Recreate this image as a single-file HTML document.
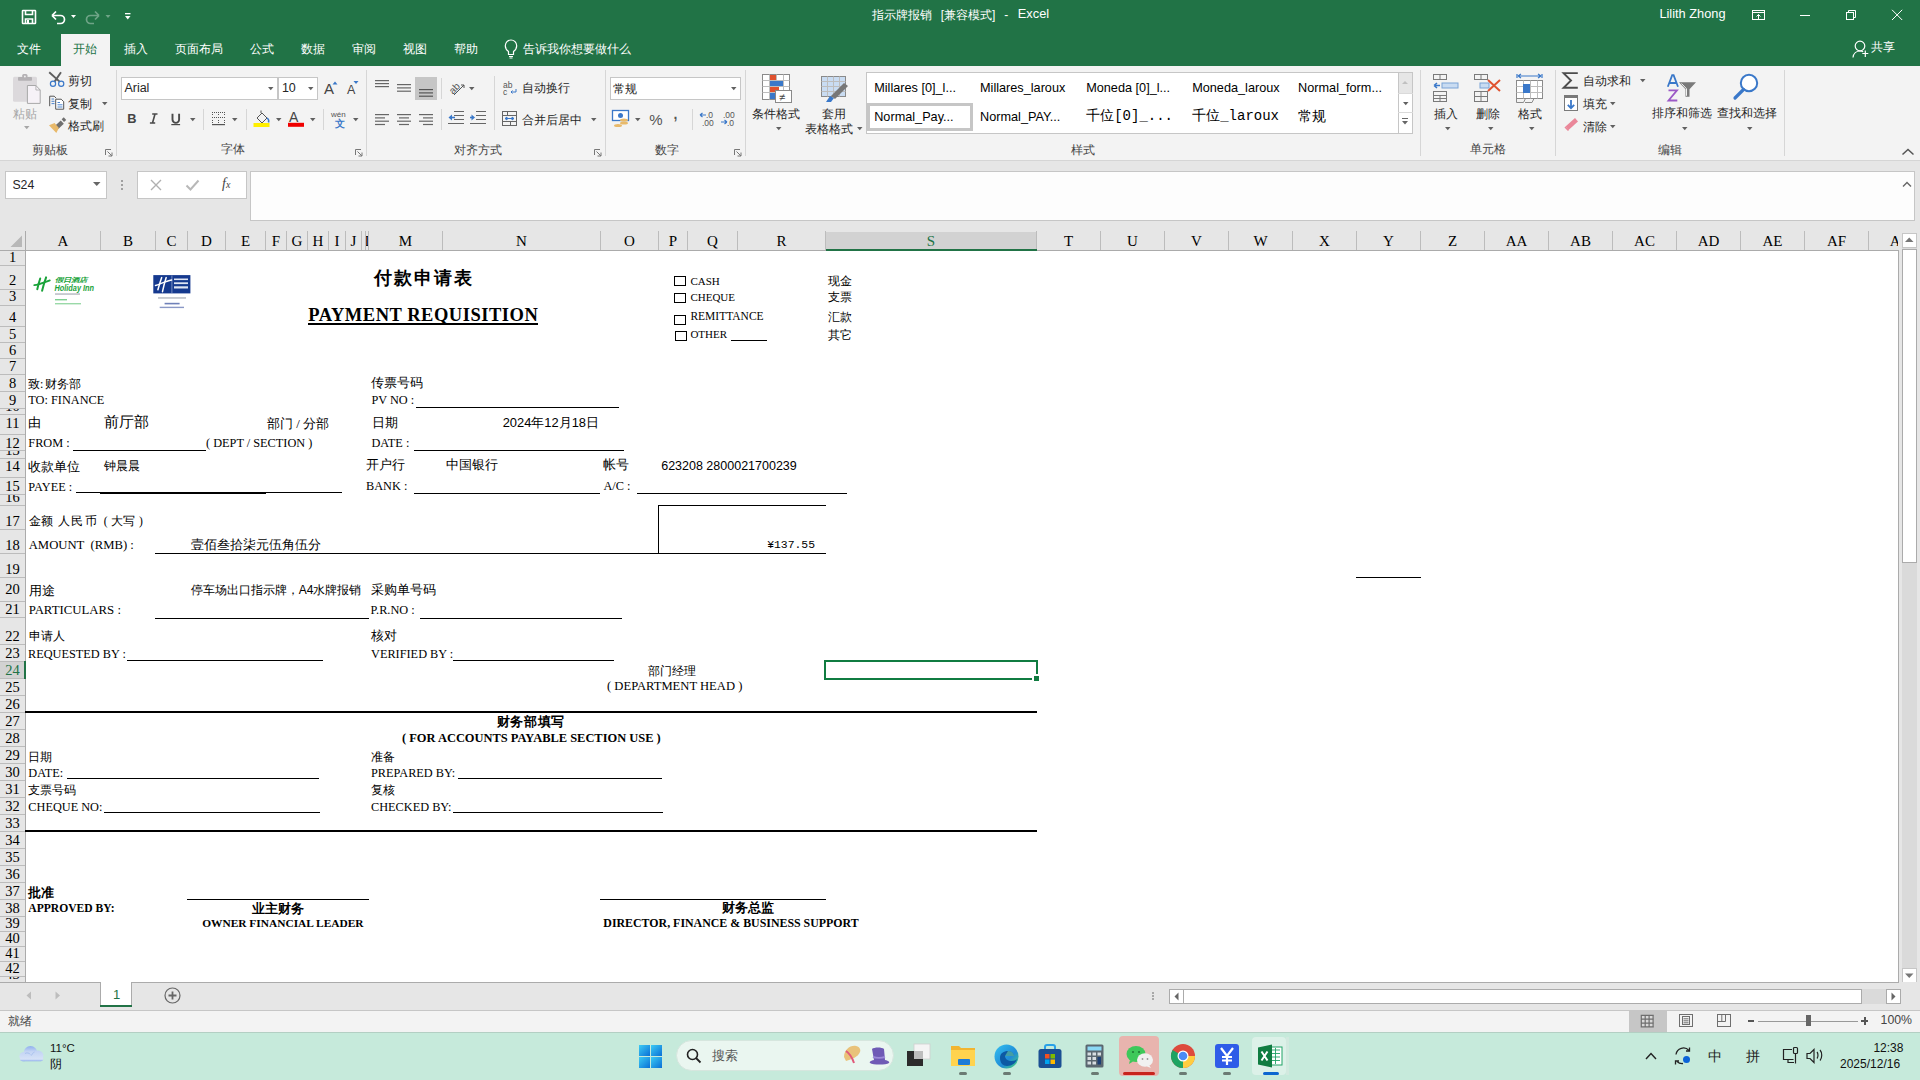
<!DOCTYPE html><html><head><meta charset="utf-8"><style>
*{margin:0;padding:0;box-sizing:border-box}
html,body{width:1920px;height:1080px;overflow:hidden;background:#fff;position:relative;font-family:"Liberation Sans",sans-serif}
.t{position:absolute;white-space:pre;line-height:1}
.r{position:absolute}
svg{position:absolute;overflow:visible}
</style></head><body>
<div class="r" style="left:0px;top:0px;width:1920px;height:66px;background:#217346;"></div>
<div class="r" style="left:61px;top:34px;width:49px;height:32px;background:#f3f3f3;"></div>
<svg style="left:0;top:0" width="140" height="34">
<g fill="none" stroke="#fff" stroke-width="1.6">
<rect x="22.5" y="10.5" width="13" height="13" rx="0.5"/>
<path d="M25.5 10.5v4h7v-4"/><path d="M25.5 23.5v-4.5h7v4.5"/>
</g>
<rect x="27" y="20" width="2" height="3.5" fill="#fff"/>
<path d="M52 15.5l4-4M52 15.5l4 4M52 15.5h8.5a4 4 0 0 1 0 8H57" fill="none" stroke="#fff" stroke-width="1.7"/>
<path d="M71 15h5l-2.5 3z" fill="#fff"/>
<g opacity="0.35"><path d="M99 15.5l-4-4M99 15.5l-4 4M99 15.5h-8.5a4 4 0 0 0 0 8H94" fill="none" stroke="#fff" stroke-width="1.7"/>
<path d="M105.5 15h5l-2.5 3z" fill="#fff"/></g>
<rect x="125" y="13" width="5.5" height="1.3" fill="#fff"/><path d="M125 16h5.5l-2.75 3.5z" fill="#fff"/>
</svg>
<div class="t" style="left:871.7px;top:8.5px;font-size:12px;font-family:'Liberation Sans',sans-serif;font-weight:400;color:#ffffff;">指示牌报销</div>
<div class="t" style="left:940.7px;top:8.5px;font-size:12px;font-family:'Liberation Sans',sans-serif;font-weight:400;color:#ffffff;">[兼容模式]</div>
<div class="t" style="left:1004.2px;top:8.5px;font-size:12px;font-family:'Liberation Sans',sans-serif;font-weight:400;color:#ffffff;">-</div>
<div class="t" style="left:1017.8px;top:8.1px;font-size:12.8px;font-family:'Liberation Sans',sans-serif;font-weight:400;color:#ffffff;">Excel</div>
<div class="t" style="left:1659.4px;top:8.1px;font-size:12.8px;font-family:'Liberation Sans',sans-serif;font-weight:400;color:#ffffff;">Lilith Zhong</div>
<svg style="left:1740;top:0" width="180" height="34">
<g fill="none" stroke="#fff" stroke-width="1">
<rect x="12.5" y="10.5" width="12" height="9"/><path d="M12.5 12.5h12M18.5 14.5v5M16.5 16.5l2-2 2 2"/>
<path d="M60 15.5h10"/>
<rect x="106.5" y="12.5" width="7" height="7"/><path d="M108.5 12.5v-2h7v7h-2"/>
<path d="M152 9.8l10.2 10.2M162.2 9.8L152 20"/>
</g></svg>
<div class="t" style="left:17.0px;top:42.8px;font-size:12px;font-family:'Liberation Sans',sans-serif;font-weight:400;color:#ffffff;">文件</div>
<div class="t" style="left:72.8px;top:42.8px;font-size:12px;font-family:'Liberation Sans',sans-serif;font-weight:400;color:#217346;">开始</div>
<div class="t" style="left:123.7px;top:42.8px;font-size:12px;font-family:'Liberation Sans',sans-serif;font-weight:400;color:#ffffff;">插入</div>
<div class="t" style="left:175.0px;top:42.8px;font-size:12px;font-family:'Liberation Sans',sans-serif;font-weight:400;color:#ffffff;">页面布局</div>
<div class="t" style="left:250.0px;top:42.8px;font-size:12px;font-family:'Liberation Sans',sans-serif;font-weight:400;color:#ffffff;">公式</div>
<div class="t" style="left:300.7px;top:42.8px;font-size:12px;font-family:'Liberation Sans',sans-serif;font-weight:400;color:#ffffff;">数据</div>
<div class="t" style="left:351.9px;top:42.8px;font-size:12px;font-family:'Liberation Sans',sans-serif;font-weight:400;color:#ffffff;">审阅</div>
<div class="t" style="left:402.5px;top:42.8px;font-size:12px;font-family:'Liberation Sans',sans-serif;font-weight:400;color:#ffffff;">视图</div>
<div class="t" style="left:454.0px;top:42.8px;font-size:12px;font-family:'Liberation Sans',sans-serif;font-weight:400;color:#ffffff;">帮助</div>
<div class="t" style="left:523.4px;top:42.8px;font-size:12px;font-family:'Liberation Sans',sans-serif;font-weight:400;color:#ffffff;">告诉我你想要做什么</div>
<svg style="left:500;top:36" width="24" height="26"><g fill="none" stroke="#fff" stroke-width="1.2">
<path d="M8.5 18.5v-3c-2-1.5-3.2-3.4-3.2-5.8a5.7 5.7 0 0 1 11.4 0c0 2.4-1.2 4.3-3.2 5.8v3z"/><path d="M9 20.5h4M9.5 22h3"/></g></svg>
<svg style="left:1848;top:38" width="24" height="22"><g fill="none" stroke="#fff" stroke-width="1.2">
<circle cx="12" cy="8" r="4.8"/><path d="M5 19.5c.5-4 3.5-6.5 7-6.5 1.2 0 2.3.3 3.2.8"/><path d="M14.3 15.5h6M17.3 12.5v6.5"/></g></svg>
<div class="t" style="left:1871.0px;top:41.3px;font-size:12px;font-family:'Liberation Sans',sans-serif;font-weight:400;color:#ffffff;">共享</div>
<div class="r" style="left:0px;top:66px;width:1920px;height:94px;background:#f3f3f3;"></div>
<div class="r" style="left:0px;top:160px;width:1920px;height:1px;background:#d5d5d5;"></div>
<div class="r" style="left:116px;top:70px;width:1px;height:86px;background:#d6d6d6;"></div>
<div class="r" style="left:366px;top:70px;width:1px;height:86px;background:#d6d6d6;"></div>
<div class="r" style="left:605px;top:70px;width:1px;height:86px;background:#d6d6d6;"></div>
<div class="r" style="left:745px;top:70px;width:1px;height:86px;background:#d6d6d6;"></div>
<div class="r" style="left:1420px;top:70px;width:1px;height:86px;background:#d6d6d6;"></div>
<div class="r" style="left:1555px;top:70px;width:1px;height:86px;background:#d6d6d6;"></div>
<div class="r" style="left:1784px;top:70px;width:1px;height:86px;background:#d6d6d6;"></div>
<div class="t" style="left:32.2px;top:143.8px;font-size:12px;font-family:'Liberation Sans',sans-serif;font-weight:400;color:#444;">剪贴板</div>
<div class="t" style="left:221.0px;top:143.4px;font-size:12px;font-family:'Liberation Sans',sans-serif;font-weight:400;color:#444;">字体</div>
<div class="t" style="left:454.2px;top:143.5px;font-size:12px;font-family:'Liberation Sans',sans-serif;font-weight:400;color:#444;">对齐方式</div>
<div class="t" style="left:655.0px;top:143.5px;font-size:12px;font-family:'Liberation Sans',sans-serif;font-weight:400;color:#444;">数字</div>
<div class="t" style="left:1071.2px;top:143.5px;font-size:12px;font-family:'Liberation Sans',sans-serif;font-weight:400;color:#444;">样式</div>
<div class="t" style="left:1470.2px;top:143.3px;font-size:12px;font-family:'Liberation Sans',sans-serif;font-weight:400;color:#444;">单元格</div>
<div class="t" style="left:1658.2px;top:143.5px;font-size:12px;font-family:'Liberation Sans',sans-serif;font-weight:400;color:#444;">编辑</div>
<svg style="left:105px;top:148.5px" width="8" height="8"><path d="M0.5 6V0.5H6" fill="none" stroke="#777" stroke-width="1"/><path d="M2.5 2.5L7 7M7 3.5V7H3.5" fill="none" stroke="#777" stroke-width="1"/></svg>
<svg style="left:355px;top:148.5px" width="8" height="8"><path d="M0.5 6V0.5H6" fill="none" stroke="#777" stroke-width="1"/><path d="M2.5 2.5L7 7M7 3.5V7H3.5" fill="none" stroke="#777" stroke-width="1"/></svg>
<svg style="left:594px;top:148.5px" width="8" height="8"><path d="M0.5 6V0.5H6" fill="none" stroke="#777" stroke-width="1"/><path d="M2.5 2.5L7 7M7 3.5V7H3.5" fill="none" stroke="#777" stroke-width="1"/></svg>
<svg style="left:734px;top:148.5px" width="8" height="8"><path d="M0.5 6V0.5H6" fill="none" stroke="#777" stroke-width="1"/><path d="M2.5 2.5L7 7M7 3.5V7H3.5" fill="none" stroke="#777" stroke-width="1"/></svg>
<svg style="left:1901px;top:148px" width="14" height="8"><path d="M1.5 6.5L7 1.5l5.5 5" fill="none" stroke="#555" stroke-width="1.5"/></svg>
<svg style="left:0px;top:66px" width="70" height="70">
<rect x="13" y="10.8" width="24" height="25" rx="1.5" fill="#dcd9dc"/>
<rect x="18" y="11" width="14" height="3.8" rx="0.8" fill="#b4b1b4"/>
<rect x="22.2" y="8" width="5.3" height="4" rx="1.5" fill="#b4b1b4"/><circle cx="24.9" cy="10.5" r="0.9" fill="#f3f3f3"/>
<path d="M27.4 19.5h8.5l4.3 4.5v13.4H27.4z" fill="#f6f2f7" stroke="#a8a8a8" stroke-width="1"/>
<path d="M35.9 19.5v4.5h4.3" fill="none" stroke="#a8a8a8" stroke-width="0.8"/>
<path d="M49.2 6.2L59.6 15.6M61 6.2L54.6 15.6" stroke="#5f5f5f" stroke-width="1.9"/>
<circle cx="53" cy="17.8" r="2.6" fill="#f3f3f3" stroke="#3a78c9" stroke-width="1.2"/><circle cx="61.2" cy="17.8" r="2.6" fill="#f3f3f3" stroke="#3a78c9" stroke-width="1.2"/>
<path d="M49.7 40.2v-10h4.5l2 2" fill="none" stroke="#555" stroke-width="1"/>
<path d="M51.5 33h2.5M51.5 35.3h3M51.5 37.6h3" stroke="#3a78c9" stroke-width="0.9"/>
<path d="M55.7 43.2v-10h5.5l2.5 2.5v7.5z" fill="#fff" stroke="#555" stroke-width="1"/>
<path d="M57.5 36.5h2.5M57.5 38.8h5M57.5 41h5" stroke="#3a78c9" stroke-width="0.9"/>
<path d="M55.3 59.6l5.5-5.2 3 3.3-5.5 5.2z" fill="#6f6f6f"/><path d="M61.6 53.3l2.2-2 2.4 2.6-2.2 2z" fill="#6f6f6f"/>
<path d="M49 59.3l5.6-2.2 4.3 4.8-2.6 5.2z" fill="#e8b96a"/>
</svg>
<div class="t" style="left:12.5px;top:107.5px;font-size:12px;font-family:'Liberation Sans',sans-serif;font-weight:400;color:#a6a6a6;">粘贴</div>
<svg style="left:24px;top:126px" width="6" height="4"><path d="M0 0h5.5L2.75 3.2z" fill="#a6a6a6"/></svg>
<div class="t" style="left:68.1px;top:75.0px;font-size:12px;font-family:'Liberation Sans',sans-serif;font-weight:400;color:#262626;">剪切</div>
<div class="t" style="left:68.1px;top:97.6px;font-size:12px;font-family:'Liberation Sans',sans-serif;font-weight:400;color:#262626;">复制</div>
<svg style="left:101.9px;top:101.5px" width="6" height="4"><path d="M0 0h5.5L2.75 3.2z" fill="#606060"/></svg>
<div class="t" style="left:68.1px;top:120.3px;font-size:12px;font-family:'Liberation Sans',sans-serif;font-weight:400;color:#262626;">格式刷</div>
<div class="r" style="left:121px;top:77px;width:157px;height:23px;background:#fff;border:1px solid #c6c6c6"></div>
<div class="t" style="left:124.4px;top:82.2px;font-size:12.5px;font-family:'Liberation Sans',sans-serif;font-weight:400;color:#262626;">Arial</div>
<svg style="left:268px;top:87px" width="6" height="4"><path d="M0 0h5.5L2.75 3.2z" fill="#606060"/></svg>
<div class="r" style="left:278px;top:77px;width:40px;height:23px;background:#fff;border:1px solid #c6c6c6"></div>
<div class="t" style="left:281.9px;top:82.2px;font-size:12.5px;font-family:'Liberation Sans',sans-serif;font-weight:400;color:#262626;">10</div>
<svg style="left:307.9px;top:87px" width="6" height="4"><path d="M0 0h5.5L2.75 3.2z" fill="#606060"/></svg>
<svg style="left:322px;top:79px" width="40" height="17">
<text x="2" y="15" font-family="Liberation Sans" font-size="15" fill="#444">A</text>
<path d="M10.5 5.5l2.5-3 2.5 3z" fill="#3a78c9"/>
<text x="25" y="15" font-family="Liberation Sans" font-size="12.5" fill="#444">A</text>
<path d="M31.5 2h5l-2.5 3z" fill="#3a78c9"/>
</svg>
<svg style="left:118px;top:104px" width="112" height="24">
<text x="9.2" y="19" font-family="Liberation Sans" font-size="12.8" font-weight="700" fill="#444">B</text>
<path d="M34.2 10h5.3M31.9 19h5.3M37 10l-2.5 9" fill="none" stroke="#4a4a4a" stroke-width="1.6"/>
<path d="M54.5 9.8v5.8a3.3 3.3 0 0 0 6.6 0V9.8" fill="none" stroke="#4a4a4a" stroke-width="1.9"/>
<rect x="53.3" y="20" width="8.8" height="1.2" fill="#4a4a4a"/>
<g fill="#555">
<rect x="94" y="8" width="1" height="1"/><rect x="96" y="8" width="1" height="1"/><rect x="98" y="8" width="1" height="1"/><rect x="100" y="8" width="1" height="1"/><rect x="102" y="8" width="1" height="1"/><rect x="104" y="8" width="1" height="1"/><rect x="106" y="8" width="1" height="1"/>
<rect x="94" y="13" width="1" height="1"/><rect x="96" y="13" width="1" height="1"/><rect x="98" y="13" width="1" height="1"/><rect x="100" y="13" width="1" height="1"/><rect x="102" y="13" width="1" height="1"/><rect x="104" y="13" width="1" height="1"/><rect x="106" y="13" width="1" height="1"/>
<rect x="94" y="10" width="1" height="1"/><rect x="94" y="16" width="1" height="1"/><rect x="94" y="18" width="1" height="1"/>
<rect x="100" y="10" width="1" height="1"/><rect x="100" y="16" width="1" height="1"/><rect x="100" y="18" width="1" height="1"/>
<rect x="106" y="10" width="1" height="1"/><rect x="106" y="16" width="1" height="1"/><rect x="106" y="18" width="1" height="1"/>
</g>
<rect x="94" y="20" width="13" height="1.2" fill="#555"/>
</svg>
<svg style="left:189.75px;top:118px" width="6" height="4"><path d="M0 0h5.5L2.75 3.2z" fill="#606060"/></svg>
<div class="r" style="left:203px;top:109px;width:1px;height:21px;background:#d6d6d6;"></div>
<svg style="left:232px;top:118px" width="6" height="4"><path d="M0 0h5.5L2.75 3.2z" fill="#606060"/></svg>
<div class="r" style="left:246px;top:109px;width:1px;height:21px;background:#d6d6d6;"></div>
<svg style="left:253px;top:110px" width="20" height="18">
<path d="M4 8l5-5 5 5-5 5z" fill="none" stroke="#555" stroke-width="1"/><path d="M8 3V0.5" stroke="#555"/>
<path d="M14 8c1.5 1 2 3 1.5 4.5" fill="none" stroke="#3a78c9" stroke-width="1.5"/>
<rect x="0.5" y="13" width="16" height="4" fill="#ffef00"/></svg>
<svg style="left:276px;top:118px" width="6" height="4"><path d="M0 0h5.5L2.75 3.2z" fill="#606060"/></svg>
<svg style="left:287px;top:110px" width="20" height="18">
<text x="2" y="12" font-family="Liberation Sans" font-size="14" fill="#444">A</text>
<rect x="1" y="12.8" width="16" height="4" fill="#f00000"/></svg>
<svg style="left:310px;top:118px" width="6" height="4"><path d="M0 0h5.5L2.75 3.2z" fill="#606060"/></svg>
<div class="r" style="left:323px;top:109px;width:1px;height:21px;background:#d6d6d6;"></div>
<svg style="left:331px;top:110px" width="18" height="18">
<text x="0" y="7" font-family="Liberation Sans" font-size="8" fill="#555">wén</text>
<text x="4" y="17" font-family="Liberation Sans" font-size="10" font-weight="700" fill="#3a78c9">文</text></svg>
<svg style="left:353px;top:118px" width="6" height="4"><path d="M0 0h5.5L2.75 3.2z" fill="#606060"/></svg>
<svg style="left:375px;top:80px" width="20" height="20"><rect x="0" y="0" width="14" height="1.2" fill="#666"/><rect x="0" y="3" width="14" height="1.2" fill="#666"/><rect x="0" y="6" width="14" height="1.2" fill="#666"/></svg>
<svg style="left:397px;top:84px" width="20" height="20"><rect x="0" y="0.0" width="14" height="1.2" fill="#666"/><rect x="0" y="3.3" width="14" height="1.2" fill="#666"/><rect x="0" y="6.6" width="14" height="1.2" fill="#666"/></svg>
<div class="r" style="left:415px;top:77px;width:22px;height:23px;background:#c6c6c6;"></div>
<svg style="left:419px;top:89px" width="20" height="20"><rect x="0" y="0.0" width="14" height="1.2" fill="#555"/><rect x="0" y="3.3" width="14" height="1.2" fill="#555"/><rect x="0" y="6.6" width="14" height="1.2" fill="#555"/></svg>
<div class="r" style="left:441px;top:78px;width:1px;height:21px;background:#d6d6d6;"></div>
<svg style="left:448px;top:79px" width="20" height="17">
<text x="0" y="12" font-family="Liberation Sans" font-size="10" fill="#555" transform="rotate(-45 7 8)">ab</text>
<path d="M6 16l10-10M13 6h3v3" fill="none" stroke="#555" stroke-width="1"/></svg>
<svg style="left:469.2px;top:86.5px" width="6" height="4"><path d="M0 0h5.5L2.75 3.2z" fill="#606060"/></svg>
<svg style="left:375px;top:113.5px" width="20" height="20"><rect x="0" y="0.0" width="14" height="1.2" fill="#666"/><rect x="0" y="3.3" width="10" height="1.2" fill="#666"/><rect x="0" y="6.6" width="14" height="1.2" fill="#666"/><rect x="0" y="9.899999999999999" width="10" height="1.2" fill="#666"/></svg>
<svg style="left:397px;top:113.5px" width="20" height="20"><rect x="0" y="0.0" width="14" height="1.2" fill="#666"/><rect x="2" y="3.3" width="10" height="1.2" fill="#666"/><rect x="0" y="6.6" width="14" height="1.2" fill="#666"/><rect x="2" y="9.899999999999999" width="10" height="1.2" fill="#666"/></svg>
<svg style="left:419px;top:113.5px" width="20" height="20"><rect x="0" y="0.0" width="14" height="1.2" fill="#666"/><rect x="4" y="3.3" width="10" height="1.2" fill="#666"/><rect x="0" y="6.6" width="14" height="1.2" fill="#666"/><rect x="4" y="9.899999999999999" width="10" height="1.2" fill="#666"/></svg>
<div class="r" style="left:441px;top:109px;width:1px;height:21px;background:#d6d6d6;"></div>
<svg style="left:448px;top:111px" width="42" height="15">
<path d="M6 0.5h10M6 4.5h10M6 8.5h10M0 12.5h16" stroke="#666" stroke-width="1.1"/>
<path d="M0.5 6.5l3.5-3v6z" fill="#3a78c9"/><path d="M3 6.5h4" stroke="#3a78c9" stroke-width="1.6"/>
<path d="M28 0.5h10M28 4.5h10M28 8.5h10M22 12.5h16" stroke="#666" stroke-width="1.1"/>
<path d="M27 6.5l-3.5-3v6z" fill="#3a78c9"/><path d="M22 6.5h3" stroke="#3a78c9" stroke-width="1.6"/>
</svg>
<div class="r" style="left:494px;top:76px;width:1px;height:54px;background:#d6d6d6;"></div>
<svg style="left:503px;top:81px" width="16" height="15">
<text x="0" y="7" font-family="Liberation Sans" font-size="8.5" fill="#555">ab</text>
<text x="0" y="14" font-family="Liberation Sans" font-size="8.5" fill="#555">c</text>
<path d="M13 8v3h-5M9.5 9.5l-1.5 1.5 1.5 1.5" fill="none" stroke="#3a78c9" stroke-width="1"/></svg>
<div class="t" style="left:521.7px;top:82.1px;font-size:12px;font-family:'Liberation Sans',sans-serif;font-weight:400;color:#262626;">自动换行</div>
<svg style="left:501px;top:110px" width="17" height="17"><g fill="none" stroke="#666" stroke-width="1">
<rect x="1.5" y="1.5" width="14" height="14"/><path d="M1.5 5.5h14M1.5 11.5h14M6.5 1.5v4M9.5 11.5v4"/></g>
<path d="M4 8.5h9M4 8.5l2-1.5v3zM13 8.5l-2-1.5v3z" stroke="#3a78c9" fill="#3a78c9" stroke-width="1"/></svg>
<div class="t" style="left:521.7px;top:113.5px;font-size:12px;font-family:'Liberation Sans',sans-serif;font-weight:400;color:#262626;">合并后居中</div>
<svg style="left:590.8px;top:117.5px" width="6" height="4"><path d="M0 0h5.5L2.75 3.2z" fill="#606060"/></svg>
<div class="r" style="left:610px;top:77px;width:131px;height:23px;background:#fff;border:1px solid #c6c6c6"></div>
<div class="t" style="left:613.3px;top:82.5px;font-size:12px;font-family:'Liberation Sans',sans-serif;font-weight:400;color:#262626;">常规</div>
<svg style="left:730.8px;top:87px" width="6" height="4"><path d="M0 0h5.5L2.75 3.2z" fill="#606060"/></svg>
<svg style="left:612px;top:110px" width="19" height="18">
<rect x="0.5" y="0.5" width="16" height="10" fill="#fff" stroke="#3a78c9" stroke-width="1.3"/>
<circle cx="8.5" cy="5.5" r="2.5" fill="#3a78c9"/>
<ellipse cx="12" cy="10" rx="4" ry="1.6" fill="#e8b96a"/><ellipse cx="12" cy="13" rx="4" ry="1.6" fill="#e8b96a"/><ellipse cx="6" cy="15.5" rx="4" ry="1.6" fill="#e8b96a"/></svg>
<svg style="left:635px;top:118px" width="6" height="4"><path d="M0 0h5.5L2.75 3.2z" fill="#606060"/></svg>
<div class="t" style="left:649.2px;top:112.0px;font-size:15px;font-family:'Liberation Sans',sans-serif;font-weight:400;color:#555;">%</div>
<div class="t" style="left:673.5px;top:107.0px;font-size:14px;font-family:'Liberation Sans',sans-serif;font-weight:700;color:#555;">,</div>
<div class="r" style="left:692px;top:109px;width:1px;height:21px;background:#d6d6d6;"></div>
<svg style="left:699px;top:110px" width="40" height="17">
<text x="7" y="8" font-family="Liberation Sans" font-size="8.5" fill="#555">.0</text>
<text x="3" y="16" font-family="Liberation Sans" font-size="8.5" fill="#555">.00</text>
<path d="M1 5h6M1 5l2.5-2M1 5l2.5 2" fill="none" stroke="#3a78c9" stroke-width="1.2"/>
<text x="24" y="8" font-family="Liberation Sans" font-size="8.5" fill="#555">.00</text>
<text x="28" y="16" font-family="Liberation Sans" font-size="8.5" fill="#555">.0</text>
<path d="M22 12h6M28 12l-2.5-2M28 12l-2.5 2" fill="none" stroke="#3a78c9" stroke-width="1.2"/>
</svg>
<svg style="left:761px;top:73px" width="34" height="32">
<g fill="#fff" stroke="#8a8a8a" stroke-width="1"><rect x="1.5" y="1.5" width="27" height="25"/></g>
<g stroke="#bdbdbd" stroke-width="1"><path d="M1.5 7.5h27M1.5 13.5h27M1.5 19.5h27M8.5 1.5v25M15.5 1.5v25M22.5 1.5v25"/></g>
<rect x="9" y="2" width="6" height="5" fill="#e0522f"/><rect x="9" y="8" width="13" height="5" fill="#3a78c9"/><rect x="9" y="14" width="9" height="5" fill="#e0522f"/><rect x="9" y="20" width="5" height="6" fill="#3a78c9"/>
<rect x="14.5" y="17.5" width="16" height="12" fill="#fff" stroke="#8a8a8a"/>
<text x="18" y="28" font-family="Liberation Sans" font-size="11" fill="#444">≠</text></svg>
<div class="t" style="left:752.0px;top:107.8px;font-size:12px;font-family:'Liberation Sans',sans-serif;font-weight:400;color:#262626;">条件格式</div>
<svg style="left:775.8px;top:127px" width="6" height="4"><path d="M0 0h5.5L2.75 3.2z" fill="#606060"/></svg>
<svg style="left:820px;top:75px" width="32" height="30">
<rect x="1.5" y="1.5" width="24" height="20" fill="#c9dcf2" stroke="#8a8a8a"/>
<g stroke="#bdbdbd"><path d="M1.5 6.5h24M1.5 11.5h24M1.5 16.5h24M7.5 1.5v20M13.5 1.5v20M19.5 1.5v20"/></g>
<path d="M6 27l4-6 4 2-3 4z" fill="#3a78c9"/><path d="M11 21l13-13 4 3-13 13z" fill="#777"/></svg>
<div class="t" style="left:821.7px;top:107.8px;font-size:12px;font-family:'Liberation Sans',sans-serif;font-weight:400;color:#262626;">套用</div>
<div class="t" style="left:805.0px;top:122.5px;font-size:12px;font-family:'Liberation Sans',sans-serif;font-weight:400;color:#262626;">表格格式</div>
<svg style="left:856.7px;top:127px" width="6" height="4"><path d="M0 0h5.5L2.75 3.2z" fill="#606060"/></svg>
<div class="r" style="left:866px;top:72px;width:547px;height:62px;background:#fff;border:1px solid #c6c6c6"></div>
<div class="r" style="left:1398px;top:72px;width:15px;height:62px;background:#fff;border:1px solid #c6c6c6"></div>
<div class="r" style="left:1399px;top:73px;width:13px;height:20px;background:#e6e6e6;"></div>
<div class="r" style="left:1398px;top:93px;width:15px;height:1px;background:#dadada;"></div>
<div class="r" style="left:1398px;top:112px;width:15px;height:1px;background:#dadada;"></div>
<svg style="left:1402px;top:80px" width="8" height="5"><path d="M0 4h6L3 1z" fill="#c0c0c0"/></svg>
<svg style="left:1403px;top:101.5px" width="6" height="4"><path d="M0 0h5.5L2.75 3.2z" fill="#606060"/></svg>
<svg style="left:1402px;top:118px" width="8" height="10"><rect x="0" y="0" width="6" height="1" fill="#666"/><path d="M0 3h6L3 6.5z" fill="#666"/></svg>
<div class="r" style="left:867px;top:103px;width:106px;height:28px;background:transparent;border:3px solid #c6c6c6"></div>
<div class="t" style="left:874.2px;top:82.0px;font-size:12.7px;font-family:'Liberation Sans',sans-serif;font-weight:400;color:#000;">Millares [0]_l...</div>
<div class="t" style="left:980.0px;top:82.0px;font-size:12.7px;font-family:'Liberation Sans',sans-serif;font-weight:400;color:#000;">Millares_laroux</div>
<div class="t" style="left:1086.2px;top:82.0px;font-size:12.7px;font-family:'Liberation Sans',sans-serif;font-weight:400;color:#000;">Moneda [0]_l...</div>
<div class="t" style="left:1192.2px;top:82.0px;font-size:12.7px;font-family:'Liberation Sans',sans-serif;font-weight:400;color:#000;">Moneda_laroux</div>
<div class="t" style="left:1298.1px;top:82.0px;font-size:12.7px;font-family:'Liberation Sans',sans-serif;font-weight:400;color:#000;">Normal_form...</div>
<div class="t" style="left:874.2px;top:110.7px;font-size:12.7px;font-family:'Liberation Sans',sans-serif;font-weight:400;color:#000;">Normal_Pay...</div>
<div class="t" style="left:980.0px;top:110.7px;font-size:12.7px;font-family:'Liberation Sans',sans-serif;font-weight:400;color:#000;">Normal_PAY...</div>
<div class="t" style="left:1086.2px;top:108.5px;font-size:14px;font-family:'Liberation Mono',monospace;font-weight:400;color:#000;letter-spacing:0px">千位[0]_...</div>
<div class="t" style="left:1192.2px;top:108.5px;font-size:14px;font-family:'Liberation Mono',monospace;font-weight:400;color:#000;">千位_laroux</div>
<div class="t" style="left:1298.1px;top:108.5px;font-size:14px;font-family:'Liberation Sans',sans-serif;font-weight:400;color:#000;">常规</div>
<svg style="left:1432px;top:73px" width="30" height="30">
<g fill="none" stroke="#7a7a7a" stroke-width="1"><rect x="1.5" y="1.5" width="13" height="5"/><path d="M8 1.5v5"/><rect x="1.5" y="22.5" width="13" height="6"/><path d="M8 22.5v6M1.5 25.5h13"/>
<rect x="1.5" y="18.5" width="13" height="4"/></g>
<rect x="10" y="10" width="16" height="5" fill="#c9dcf2" stroke="#7aa3d6"/>
<path d="M2 12.5h6M2 12.5l3-2.5M2 12.5l3 2.5" fill="none" stroke="#3a78c9" stroke-width="1.6"/></svg>
<div class="t" style="left:1433.9px;top:107.5px;font-size:12px;font-family:'Liberation Sans',sans-serif;font-weight:400;color:#262626;">插入</div>
<svg style="left:1445px;top:126.5px" width="6" height="4"><path d="M0 0h5.5L2.75 3.2z" fill="#606060"/></svg>
<svg style="left:1473px;top:73px" width="32" height="30">
<g fill="none" stroke="#7a7a7a" stroke-width="1"><rect x="1.5" y="1.5" width="13" height="5"/><path d="M8 1.5v5"/><rect x="1.5" y="18.5" width="13" height="10"/><path d="M8 18.5v10M1.5 23.5h13"/></g>
<rect x="7" y="10" width="9" height="5" fill="#c9dcf2" stroke="#7aa3d6"/>
<path d="M15 7l12 11M27 7L15 18" stroke="#e0522f" stroke-width="2"/></svg>
<div class="t" style="left:1476.0px;top:107.5px;font-size:12px;font-family:'Liberation Sans',sans-serif;font-weight:400;color:#262626;">删除</div>
<svg style="left:1487.5px;top:126.5px" width="6" height="4"><path d="M0 0h5.5L2.75 3.2z" fill="#606060"/></svg>
<svg style="left:1515px;top:72px" width="30" height="32">
<path d="M2 2v4M27 2v4M3 4h23M3 4l3-2M3 4l3 2M26 4l-3-2M26 4l-3 2" fill="none" stroke="#3a78c9" stroke-width="1.2"/>
<rect x="1.5" y="8.5" width="26" height="18" fill="#fff" stroke="#8a8a8a"/>
<g stroke="#bdbdbd"><path d="M1.5 14.5h26M1.5 20.5h26M8.5 8.5v18M15.5 8.5v18M22.5 8.5v18"/></g>
<rect x="8" y="12" width="7" height="9" fill="#3a78c9"/>
<path d="M1.5 26.5v4h7l2-4M10 30.5h7l2-4" fill="none" stroke="#8a8a8a"/></svg>
<div class="t" style="left:1518.0px;top:107.5px;font-size:12px;font-family:'Liberation Sans',sans-serif;font-weight:400;color:#262626;">格式</div>
<svg style="left:1529px;top:126.5px" width="6" height="4"><path d="M0 0h5.5L2.75 3.2z" fill="#606060"/></svg>
<svg style="left:1556px;top:68px" width="144" height="68">
<path d="M21.8 5.1H7.6l7.4 7.4-7.4 7.3h14.2" fill="none" stroke="#4d4d4d" stroke-width="1.9" stroke-linejoin="miter"/>
<rect x="8.5" y="27.5" width="13" height="15" fill="#fff" stroke="#7a7a7a" stroke-width="1"/>
<rect x="8" y="27" width="14" height="3" fill="#7a7a7a"/>
<path d="M15 32v8M11.8 36.8l3.2 3.4 3.2-3.4" fill="none" stroke="#3a78c9" stroke-width="1.8"/>
<path d="M9.5 58.5l9.5-8.5 3 3.5-9.5 8.5z" fill="#ea8799"/><path d="M9 59l3.5 3.5" stroke="#ea8799" stroke-width="1.6"/>
<path d="M111.8 18.8l4.4-11.6h1.4l4.4 11.6M113.3 15h7.2" fill="none" stroke="#3a78c9" stroke-width="1.8"/>
<path d="M112.5 22.3h8.5l-8.5 10.2h8.8" fill="none" stroke="#9b59c6" stroke-width="1.8"/>
<path d="M123 14.3h17l-6.5 7v7.5h-4v-7.5z" fill="#7a7a7a"/><path d="M125.5 15.5l5 5.3v7" fill="none" stroke="#f3f3f3" stroke-width="1"/>
</svg>
<div class="t" style="left:1582.7px;top:74.8px;font-size:12px;font-family:'Liberation Sans',sans-serif;font-weight:400;color:#262626;">自动求和</div>
<svg style="left:1640px;top:78.5px" width="6" height="4"><path d="M0 0h5.5L2.75 3.2z" fill="#606060"/></svg>
<div class="t" style="left:1582.7px;top:97.8px;font-size:12px;font-family:'Liberation Sans',sans-serif;font-weight:400;color:#262626;">填充</div>
<svg style="left:1610.4px;top:101.5px" width="6" height="4"><path d="M0 0h5.5L2.75 3.2z" fill="#606060"/></svg>
<div class="t" style="left:1582.7px;top:120.8px;font-size:12px;font-family:'Liberation Sans',sans-serif;font-weight:400;color:#262626;">清除</div>
<svg style="left:1610.4px;top:124.5px" width="6" height="4"><path d="M0 0h5.5L2.75 3.2z" fill="#606060"/></svg>
<div class="t" style="left:1652.0px;top:107.4px;font-size:12px;font-family:'Liberation Sans',sans-serif;font-weight:400;color:#262626;">排序和筛选</div>
<svg style="left:1682px;top:126.5px" width="6" height="4"><path d="M0 0h5.5L2.75 3.2z" fill="#606060"/></svg>
<svg style="left:1732px;top:73px" width="30" height="30">
<circle cx="17" cy="10" r="8.2" fill="#fff" stroke="#3a78c9" stroke-width="2"/>
<path d="M11.5 16.5L3 25" stroke="#3a78c9" stroke-width="3.2" stroke-linecap="round"/></svg>
<div class="t" style="left:1717.0px;top:107.4px;font-size:12px;font-family:'Liberation Sans',sans-serif;font-weight:400;color:#262626;">查找和选择</div>
<svg style="left:1747px;top:126.5px" width="6" height="4"><path d="M0 0h5.5L2.75 3.2z" fill="#606060"/></svg>
<div class="r" style="left:0px;top:161px;width:1920px;height:70px;background:#e6e6e6;"></div>
<div class="r" style="left:5px;top:171px;width:102px;height:28px;background:#fff;border:1px solid #c6c6c6"></div>
<div class="t" style="left:12.4px;top:179.2px;font-size:12.3px;font-family:'Liberation Sans',sans-serif;font-weight:400;color:#262626;">S24</div>
<svg style="left:93px;top:182px" width="8" height="5"><path d="M0 0h7.5L3.75 4z" fill="#666"/></svg>
<div class="r" style="left:121px;top:180px;width:2px;height:2px;background:#a0a0a0;"></div>
<div class="r" style="left:121px;top:184px;width:2px;height:2px;background:#a0a0a0;"></div>
<div class="r" style="left:121px;top:188px;width:2px;height:2px;background:#a0a0a0;"></div>
<div class="r" style="left:137px;top:171px;width:110px;height:28px;background:#fff;border:1px solid #c6c6c6"></div>
<svg style="left:148px;top:177px" width="95" height="16">
<path d="M3 3l10 10M13 3L3 13" stroke="#b0b0b0" stroke-width="1.4"/>
<path d="M38.5 8.5l4 4 8-9" fill="none" stroke="#b8b8b8" stroke-width="2"/>
</svg>
<div class="t" style="left:222px;top:177px;font-size:14px;font-family:'Liberation Serif',serif;font-style:italic;color:#444">f<span style="font-size:10px">x</span></div>
<div class="r" style="left:250px;top:171px;width:1665px;height:50px;background:#fdfdfd;border:1px solid #c6c6c6"></div>
<svg style="left:1902px;top:181px" width="10" height="7"><path d="M1 5.5l4-4 4 4" fill="none" stroke="#666" stroke-width="1.4"/></svg>
<div class="r" style="left:0px;top:231px;width:1899px;height:20px;background:#e6e6e6;"></div>
<div class="r" style="left:0px;top:250px;width:1899px;height:1px;background:#ababab;"></div>
<div class="r" style="left:826px;top:232px;width:210px;height:18px;background:#d2d2d2;"></div>
<div class="r" style="left:26px;top:232px;width:74px;height:18px;overflow:hidden"><div class="t" style="left:-3.0px;width:80px;text-align:center;top:1.5px;font-size:15px;font-family:'Liberation Serif',serif;color:#000">A</div></div>
<div class="r" style="left:101px;top:232px;width:54px;height:18px;overflow:hidden"><div class="t" style="left:-13.0px;width:80px;text-align:center;top:1.5px;font-size:15px;font-family:'Liberation Serif',serif;color:#000">B</div></div>
<div class="r" style="left:156px;top:232px;width:31px;height:18px;overflow:hidden"><div class="t" style="left:-24.5px;width:80px;text-align:center;top:1.5px;font-size:15px;font-family:'Liberation Serif',serif;color:#000">C</div></div>
<div class="r" style="left:188px;top:232px;width:37px;height:18px;overflow:hidden"><div class="t" style="left:-21.5px;width:80px;text-align:center;top:1.5px;font-size:15px;font-family:'Liberation Serif',serif;color:#000">D</div></div>
<div class="r" style="left:226px;top:232px;width:39px;height:18px;overflow:hidden"><div class="t" style="left:-20.5px;width:80px;text-align:center;top:1.5px;font-size:15px;font-family:'Liberation Serif',serif;color:#000">E</div></div>
<div class="r" style="left:266px;top:232px;width:20px;height:18px;overflow:hidden"><div class="t" style="left:-30.0px;width:80px;text-align:center;top:1.5px;font-size:15px;font-family:'Liberation Serif',serif;color:#000">F</div></div>
<div class="r" style="left:287px;top:232px;width:20px;height:18px;overflow:hidden"><div class="t" style="left:-30.0px;width:80px;text-align:center;top:1.5px;font-size:15px;font-family:'Liberation Serif',serif;color:#000">G</div></div>
<div class="r" style="left:308px;top:232px;width:20px;height:18px;overflow:hidden"><div class="t" style="left:-30.0px;width:80px;text-align:center;top:1.5px;font-size:15px;font-family:'Liberation Serif',serif;color:#000">H</div></div>
<div class="r" style="left:329px;top:232px;width:16px;height:18px;overflow:hidden"><div class="t" style="left:-32.0px;width:80px;text-align:center;top:1.5px;font-size:15px;font-family:'Liberation Serif',serif;color:#000">I</div></div>
<div class="r" style="left:346px;top:232px;width:15px;height:18px;overflow:hidden"><div class="t" style="left:-32.5px;width:80px;text-align:center;top:1.5px;font-size:15px;font-family:'Liberation Serif',serif;color:#000">J</div></div>
<div class="r" style="left:362px;top:232px;width:3px;height:18px;overflow:hidden"><div class="t" style="left:-38.5px;width:80px;text-align:center;top:1.5px;font-size:15px;font-family:'Liberation Serif',serif;color:#000"></div></div>
<div class="r" style="left:366px;top:232px;width:2px;height:18px;overflow:hidden"><div class="t" style="left:-39.0px;width:80px;text-align:center;top:1.5px;font-size:15px;font-family:'Liberation Serif',serif;color:#000">I</div></div>
<div class="r" style="left:369px;top:232px;width:73px;height:18px;overflow:hidden"><div class="t" style="left:-3.5px;width:80px;text-align:center;top:1.5px;font-size:15px;font-family:'Liberation Serif',serif;color:#000">M</div></div>
<div class="r" style="left:443px;top:232px;width:157px;height:18px;overflow:hidden"><div class="t" style="left:38.5px;width:80px;text-align:center;top:1.5px;font-size:15px;font-family:'Liberation Serif',serif;color:#000">N</div></div>
<div class="r" style="left:601px;top:232px;width:57px;height:18px;overflow:hidden"><div class="t" style="left:-11.5px;width:80px;text-align:center;top:1.5px;font-size:15px;font-family:'Liberation Serif',serif;color:#000">O</div></div>
<div class="r" style="left:659px;top:232px;width:28px;height:18px;overflow:hidden"><div class="t" style="left:-26.0px;width:80px;text-align:center;top:1.5px;font-size:15px;font-family:'Liberation Serif',serif;color:#000">P</div></div>
<div class="r" style="left:688px;top:232px;width:49px;height:18px;overflow:hidden"><div class="t" style="left:-15.5px;width:80px;text-align:center;top:1.5px;font-size:15px;font-family:'Liberation Serif',serif;color:#000">Q</div></div>
<div class="r" style="left:738px;top:232px;width:87px;height:18px;overflow:hidden"><div class="t" style="left:3.5px;width:80px;text-align:center;top:1.5px;font-size:15px;font-family:'Liberation Serif',serif;color:#000">R</div></div>
<div class="r" style="left:826px;top:232px;width:210px;height:18px;overflow:hidden"><div class="t" style="left:65.0px;width:80px;text-align:center;top:1.5px;font-size:15px;font-family:'Liberation Serif',serif;color:#217346">S</div></div>
<div class="r" style="left:1037px;top:232px;width:63px;height:18px;overflow:hidden"><div class="t" style="left:-8.5px;width:80px;text-align:center;top:1.5px;font-size:15px;font-family:'Liberation Serif',serif;color:#000">T</div></div>
<div class="r" style="left:1101px;top:232px;width:63px;height:18px;overflow:hidden"><div class="t" style="left:-8.5px;width:80px;text-align:center;top:1.5px;font-size:15px;font-family:'Liberation Serif',serif;color:#000">U</div></div>
<div class="r" style="left:1165px;top:232px;width:63px;height:18px;overflow:hidden"><div class="t" style="left:-8.5px;width:80px;text-align:center;top:1.5px;font-size:15px;font-family:'Liberation Serif',serif;color:#000">V</div></div>
<div class="r" style="left:1229px;top:232px;width:63px;height:18px;overflow:hidden"><div class="t" style="left:-8.5px;width:80px;text-align:center;top:1.5px;font-size:15px;font-family:'Liberation Serif',serif;color:#000">W</div></div>
<div class="r" style="left:1293px;top:232px;width:63px;height:18px;overflow:hidden"><div class="t" style="left:-8.5px;width:80px;text-align:center;top:1.5px;font-size:15px;font-family:'Liberation Serif',serif;color:#000">X</div></div>
<div class="r" style="left:1357px;top:232px;width:63px;height:18px;overflow:hidden"><div class="t" style="left:-8.5px;width:80px;text-align:center;top:1.5px;font-size:15px;font-family:'Liberation Serif',serif;color:#000">Y</div></div>
<div class="r" style="left:1421px;top:232px;width:63px;height:18px;overflow:hidden"><div class="t" style="left:-8.5px;width:80px;text-align:center;top:1.5px;font-size:15px;font-family:'Liberation Serif',serif;color:#000">Z</div></div>
<div class="r" style="left:1485px;top:232px;width:63px;height:18px;overflow:hidden"><div class="t" style="left:-8.5px;width:80px;text-align:center;top:1.5px;font-size:15px;font-family:'Liberation Serif',serif;color:#000">AA</div></div>
<div class="r" style="left:1549px;top:232px;width:63px;height:18px;overflow:hidden"><div class="t" style="left:-8.5px;width:80px;text-align:center;top:1.5px;font-size:15px;font-family:'Liberation Serif',serif;color:#000">AB</div></div>
<div class="r" style="left:1613px;top:232px;width:63px;height:18px;overflow:hidden"><div class="t" style="left:-8.5px;width:80px;text-align:center;top:1.5px;font-size:15px;font-family:'Liberation Serif',serif;color:#000">AC</div></div>
<div class="r" style="left:1677px;top:232px;width:63px;height:18px;overflow:hidden"><div class="t" style="left:-8.5px;width:80px;text-align:center;top:1.5px;font-size:15px;font-family:'Liberation Serif',serif;color:#000">AD</div></div>
<div class="r" style="left:1741px;top:232px;width:63px;height:18px;overflow:hidden"><div class="t" style="left:-8.5px;width:80px;text-align:center;top:1.5px;font-size:15px;font-family:'Liberation Serif',serif;color:#000">AE</div></div>
<div class="r" style="left:1805px;top:232px;width:63px;height:18px;overflow:hidden"><div class="t" style="left:-8.5px;width:80px;text-align:center;top:1.5px;font-size:15px;font-family:'Liberation Serif',serif;color:#000">AF</div></div>
<div class="r" style="left:1869px;top:232px;width:29px;height:18px;overflow:hidden"><div class="t" style="left:-8.5px;width:80px;text-align:center;top:1.5px;font-size:15px;font-family:'Liberation Serif',serif;color:#000">AG</div></div>
<div class="r" style="left:100px;top:231px;width:1px;height:19px;background:#bcbcbc;"></div>
<div class="r" style="left:155px;top:231px;width:1px;height:19px;background:#bcbcbc;"></div>
<div class="r" style="left:187px;top:231px;width:1px;height:19px;background:#bcbcbc;"></div>
<div class="r" style="left:225px;top:231px;width:1px;height:19px;background:#bcbcbc;"></div>
<div class="r" style="left:265px;top:231px;width:1px;height:19px;background:#bcbcbc;"></div>
<div class="r" style="left:286px;top:231px;width:1px;height:19px;background:#bcbcbc;"></div>
<div class="r" style="left:307px;top:231px;width:1px;height:19px;background:#bcbcbc;"></div>
<div class="r" style="left:328px;top:231px;width:1px;height:19px;background:#bcbcbc;"></div>
<div class="r" style="left:345px;top:231px;width:1px;height:19px;background:#bcbcbc;"></div>
<div class="r" style="left:361px;top:231px;width:1px;height:19px;background:#bcbcbc;"></div>
<div class="r" style="left:365px;top:231px;width:1px;height:19px;background:#bcbcbc;"></div>
<div class="r" style="left:368px;top:231px;width:1px;height:19px;background:#bcbcbc;"></div>
<div class="r" style="left:442px;top:231px;width:1px;height:19px;background:#bcbcbc;"></div>
<div class="r" style="left:600px;top:231px;width:1px;height:19px;background:#bcbcbc;"></div>
<div class="r" style="left:658px;top:231px;width:1px;height:19px;background:#bcbcbc;"></div>
<div class="r" style="left:687px;top:231px;width:1px;height:19px;background:#bcbcbc;"></div>
<div class="r" style="left:737px;top:231px;width:1px;height:19px;background:#bcbcbc;"></div>
<div class="r" style="left:825px;top:231px;width:1px;height:19px;background:#bcbcbc;"></div>
<div class="r" style="left:1036px;top:231px;width:1px;height:19px;background:#bcbcbc;"></div>
<div class="r" style="left:1100px;top:231px;width:1px;height:19px;background:#bcbcbc;"></div>
<div class="r" style="left:1164px;top:231px;width:1px;height:19px;background:#bcbcbc;"></div>
<div class="r" style="left:1228px;top:231px;width:1px;height:19px;background:#bcbcbc;"></div>
<div class="r" style="left:1292px;top:231px;width:1px;height:19px;background:#bcbcbc;"></div>
<div class="r" style="left:1356px;top:231px;width:1px;height:19px;background:#bcbcbc;"></div>
<div class="r" style="left:1420px;top:231px;width:1px;height:19px;background:#bcbcbc;"></div>
<div class="r" style="left:1484px;top:231px;width:1px;height:19px;background:#bcbcbc;"></div>
<div class="r" style="left:1548px;top:231px;width:1px;height:19px;background:#bcbcbc;"></div>
<div class="r" style="left:1612px;top:231px;width:1px;height:19px;background:#bcbcbc;"></div>
<div class="r" style="left:1676px;top:231px;width:1px;height:19px;background:#bcbcbc;"></div>
<div class="r" style="left:1740px;top:231px;width:1px;height:19px;background:#bcbcbc;"></div>
<div class="r" style="left:1804px;top:231px;width:1px;height:19px;background:#bcbcbc;"></div>
<div class="r" style="left:1868px;top:231px;width:1px;height:19px;background:#bcbcbc;"></div>
<div class="r" style="left:25px;top:231px;width:1px;height:751px;background:#ababab;"></div>
<div class="r" style="left:826px;top:249px;width:211px;height:2px;background:#217346;"></div>
<svg style="left:10px;top:235px" width="13" height="13"><path d="M12 0.5V12H0.5z" fill="#b8b8b8"/></svg>
<div class="r" style="left:1899px;top:231px;width:21px;height:751px;background:#e6e6e6;"></div>
<div class="r" style="left:1898px;top:251px;width:1px;height:731px;background:#ababab;"></div>
<div class="r" style="left:1902px;top:247px;width:15px;height:722px;background:#dadada;"></div>
<div class="r" style="left:1902px;top:233px;width:15px;height:15px;background:#fff;border:1px solid #c6c6c6"></div>
<div class="r" style="left:1902px;top:968px;width:15px;height:15px;background:#fff;border:1px solid #c6c6c6"></div>
<svg style="left:1905px;top:237px" width="9" height="6"><path d="M0 5h8.5L4.25 0.5z" fill="#777"/></svg>
<svg style="left:1905px;top:973px" width="9" height="6"><path d="M0 0.5h8.5L4.25 5z" fill="#777"/></svg>
<div class="r" style="left:1902px;top:249px;width:15px;height:314px;background:#fff;border:1px solid #ababab"></div>
<div class="r" style="left:26px;top:251px;width:1872px;height:731px;background:#fff;"></div>
<div class="r" style="left:0px;top:251px;width:25px;height:731px;background:#e6e6e6;"></div>
<div class="r" style="left:0;top:251px;width:25px;height:14px;overflow:hidden"><div class="t" style="left:0;width:25px;text-align:center;top:-1.2px;font-size:14.5px;font-family:'Liberation Serif',serif;color:#000">1</div></div>
<div class="r" style="left:0px;top:265px;width:25px;height:1px;background:#bcbcbc;"></div>
<div class="r" style="left:0;top:266px;width:25px;height:23px;overflow:hidden"><div class="t" style="left:0;width:25px;text-align:center;top:6.8px;font-size:14.5px;font-family:'Liberation Serif',serif;color:#000">2</div></div>
<div class="r" style="left:0px;top:289px;width:25px;height:1px;background:#bcbcbc;"></div>
<div class="r" style="left:0;top:290px;width:25px;height:15px;overflow:hidden"><div class="t" style="left:0;width:25px;text-align:center;top:-0.9px;font-size:14.5px;font-family:'Liberation Serif',serif;color:#000">3</div></div>
<div class="r" style="left:0px;top:305px;width:25px;height:1px;background:#bcbcbc;"></div>
<div class="r" style="left:0;top:306px;width:25px;height:20px;overflow:hidden"><div class="t" style="left:0;width:25px;text-align:center;top:3.8px;font-size:14.5px;font-family:'Liberation Serif',serif;color:#000">4</div></div>
<div class="r" style="left:0px;top:326px;width:25px;height:1px;background:#bcbcbc;"></div>
<div class="r" style="left:0;top:327px;width:25px;height:15px;overflow:hidden"><div class="t" style="left:0;width:25px;text-align:center;top:-0.2px;font-size:14.5px;font-family:'Liberation Serif',serif;color:#000">5</div></div>
<div class="r" style="left:0px;top:342px;width:25px;height:1px;background:#bcbcbc;"></div>
<div class="r" style="left:0;top:343px;width:25px;height:15px;overflow:hidden"><div class="t" style="left:0;width:25px;text-align:center;top:-0.2px;font-size:14.5px;font-family:'Liberation Serif',serif;color:#000">6</div></div>
<div class="r" style="left:0px;top:358px;width:25px;height:1px;background:#bcbcbc;"></div>
<div class="r" style="left:0;top:359px;width:25px;height:15px;overflow:hidden"><div class="t" style="left:0;width:25px;text-align:center;top:-0.2px;font-size:14.5px;font-family:'Liberation Serif',serif;color:#000">7</div></div>
<div class="r" style="left:0px;top:374px;width:25px;height:1px;background:#bcbcbc;"></div>
<div class="r" style="left:0;top:375px;width:25px;height:16px;overflow:hidden"><div class="t" style="left:0;width:25px;text-align:center;top:0.8px;font-size:14.5px;font-family:'Liberation Serif',serif;color:#000">8</div></div>
<div class="r" style="left:0px;top:391px;width:25px;height:1px;background:#bcbcbc;"></div>
<div class="r" style="left:0;top:392px;width:25px;height:16px;overflow:hidden"><div class="t" style="left:0;width:25px;text-align:center;top:0.8px;font-size:14.5px;font-family:'Liberation Serif',serif;color:#000">9</div></div>
<div class="r" style="left:0px;top:408px;width:25px;height:1px;background:#bcbcbc;"></div>
<div class="r" style="left:0;top:409px;width:25px;height:5px;overflow:hidden"><div class="t" style="left:0;width:25px;text-align:center;top:-10.2px;font-size:14.5px;font-family:'Liberation Serif',serif;color:#000">10</div></div>
<div class="r" style="left:0px;top:414px;width:25px;height:1px;background:#bcbcbc;"></div>
<div class="r" style="left:0;top:415px;width:25px;height:19px;overflow:hidden"><div class="t" style="left:0;width:25px;text-align:center;top:0.8px;font-size:14.5px;font-family:'Liberation Serif',serif;color:#000">11</div></div>
<div class="r" style="left:0px;top:434px;width:25px;height:1px;background:#bcbcbc;"></div>
<div class="r" style="left:0;top:435px;width:25px;height:15px;overflow:hidden"><div class="t" style="left:0;width:25px;text-align:center;top:0.6px;font-size:14.5px;font-family:'Liberation Serif',serif;color:#000">12</div></div>
<div class="r" style="left:0px;top:450px;width:25px;height:1px;background:#bcbcbc;"></div>
<div class="r" style="left:0;top:451px;width:25px;height:7px;overflow:hidden"><div class="t" style="left:0;width:25px;text-align:center;top:-8.2px;font-size:14.5px;font-family:'Liberation Serif',serif;color:#000">13</div></div>
<div class="r" style="left:0px;top:458px;width:25px;height:1px;background:#bcbcbc;"></div>
<div class="r" style="left:0;top:459px;width:25px;height:18px;overflow:hidden"><div class="t" style="left:0;width:25px;text-align:center;top:-0.4px;font-size:14.5px;font-family:'Liberation Serif',serif;color:#000">14</div></div>
<div class="r" style="left:0px;top:477px;width:25px;height:1px;background:#bcbcbc;"></div>
<div class="r" style="left:0;top:478px;width:25px;height:16px;overflow:hidden"><div class="t" style="left:0;width:25px;text-align:center;top:0.8px;font-size:14.5px;font-family:'Liberation Serif',serif;color:#000">15</div></div>
<div class="r" style="left:0px;top:494px;width:25px;height:1px;background:#bcbcbc;"></div>
<div class="r" style="left:0;top:495px;width:25px;height:10px;overflow:hidden"><div class="t" style="left:0;width:25px;text-align:center;top:-5.2px;font-size:14.5px;font-family:'Liberation Serif',serif;color:#000">16</div></div>
<div class="r" style="left:0px;top:505px;width:25px;height:1px;background:#bcbcbc;"></div>
<div class="r" style="left:0;top:506px;width:25px;height:23px;overflow:hidden"><div class="t" style="left:0;width:25px;text-align:center;top:7.8px;font-size:14.5px;font-family:'Liberation Serif',serif;color:#000">17</div></div>
<div class="r" style="left:0px;top:529px;width:25px;height:1px;background:#bcbcbc;"></div>
<div class="r" style="left:0;top:530px;width:25px;height:23px;overflow:hidden"><div class="t" style="left:0;width:25px;text-align:center;top:7.8px;font-size:14.5px;font-family:'Liberation Serif',serif;color:#000">18</div></div>
<div class="r" style="left:0px;top:553px;width:25px;height:1px;background:#bcbcbc;"></div>
<div class="r" style="left:0;top:554px;width:25px;height:23px;overflow:hidden"><div class="t" style="left:0;width:25px;text-align:center;top:7.8px;font-size:14.5px;font-family:'Liberation Serif',serif;color:#000">19</div></div>
<div class="r" style="left:0px;top:577px;width:25px;height:1px;background:#bcbcbc;"></div>
<div class="r" style="left:0;top:578px;width:25px;height:23px;overflow:hidden"><div class="t" style="left:0;width:25px;text-align:center;top:4.4px;font-size:14.5px;font-family:'Liberation Serif',serif;color:#000">20</div></div>
<div class="r" style="left:0px;top:601px;width:25px;height:1px;background:#bcbcbc;"></div>
<div class="r" style="left:0;top:602px;width:25px;height:15px;overflow:hidden"><div class="t" style="left:0;width:25px;text-align:center;top:-0.2px;font-size:14.5px;font-family:'Liberation Serif',serif;color:#000">21</div></div>
<div class="r" style="left:0px;top:617px;width:25px;height:1px;background:#bcbcbc;"></div>
<div class="r" style="left:0;top:618px;width:25px;height:26px;overflow:hidden"><div class="t" style="left:0;width:25px;text-align:center;top:10.8px;font-size:14.5px;font-family:'Liberation Serif',serif;color:#000">22</div></div>
<div class="r" style="left:0px;top:644px;width:25px;height:1px;background:#bcbcbc;"></div>
<div class="r" style="left:0;top:645px;width:25px;height:16px;overflow:hidden"><div class="t" style="left:0;width:25px;text-align:center;top:0.8px;font-size:14.5px;font-family:'Liberation Serif',serif;color:#000">23</div></div>
<div class="r" style="left:0px;top:661px;width:25px;height:1px;background:#bcbcbc;"></div>
<div class="r" style="left:0px;top:662px;width:25px;height:16px;background:#d2d2d2;"></div>
<div class="r" style="left:0;top:662px;width:25px;height:16px;overflow:hidden"><div class="t" style="left:0;width:25px;text-align:center;top:0.8px;font-size:14.5px;font-family:'Liberation Serif',serif;color:#217346">24</div></div>
<div class="r" style="left:0px;top:678px;width:25px;height:1px;background:#bcbcbc;"></div>
<div class="r" style="left:0;top:679px;width:25px;height:16px;overflow:hidden"><div class="t" style="left:0;width:25px;text-align:center;top:0.8px;font-size:14.5px;font-family:'Liberation Serif',serif;color:#000">25</div></div>
<div class="r" style="left:0px;top:695px;width:25px;height:1px;background:#bcbcbc;"></div>
<div class="r" style="left:0;top:696px;width:25px;height:16px;overflow:hidden"><div class="t" style="left:0;width:25px;text-align:center;top:0.8px;font-size:14.5px;font-family:'Liberation Serif',serif;color:#000">26</div></div>
<div class="r" style="left:0px;top:712px;width:25px;height:1px;background:#bcbcbc;"></div>
<div class="r" style="left:0;top:713px;width:25px;height:16px;overflow:hidden"><div class="t" style="left:0;width:25px;text-align:center;top:0.8px;font-size:14.5px;font-family:'Liberation Serif',serif;color:#000">27</div></div>
<div class="r" style="left:0px;top:729px;width:25px;height:1px;background:#bcbcbc;"></div>
<div class="r" style="left:0;top:730px;width:25px;height:16px;overflow:hidden"><div class="t" style="left:0;width:25px;text-align:center;top:0.8px;font-size:14.5px;font-family:'Liberation Serif',serif;color:#000">28</div></div>
<div class="r" style="left:0px;top:746px;width:25px;height:1px;background:#bcbcbc;"></div>
<div class="r" style="left:0;top:747px;width:25px;height:16px;overflow:hidden"><div class="t" style="left:0;width:25px;text-align:center;top:0.8px;font-size:14.5px;font-family:'Liberation Serif',serif;color:#000">29</div></div>
<div class="r" style="left:0px;top:763px;width:25px;height:1px;background:#bcbcbc;"></div>
<div class="r" style="left:0;top:764px;width:25px;height:16px;overflow:hidden"><div class="t" style="left:0;width:25px;text-align:center;top:0.8px;font-size:14.5px;font-family:'Liberation Serif',serif;color:#000">30</div></div>
<div class="r" style="left:0px;top:780px;width:25px;height:1px;background:#bcbcbc;"></div>
<div class="r" style="left:0;top:781px;width:25px;height:16px;overflow:hidden"><div class="t" style="left:0;width:25px;text-align:center;top:0.8px;font-size:14.5px;font-family:'Liberation Serif',serif;color:#000">31</div></div>
<div class="r" style="left:0px;top:797px;width:25px;height:1px;background:#bcbcbc;"></div>
<div class="r" style="left:0;top:798px;width:25px;height:16px;overflow:hidden"><div class="t" style="left:0;width:25px;text-align:center;top:0.8px;font-size:14.5px;font-family:'Liberation Serif',serif;color:#000">32</div></div>
<div class="r" style="left:0px;top:814px;width:25px;height:1px;background:#bcbcbc;"></div>
<div class="r" style="left:0;top:815px;width:25px;height:16px;overflow:hidden"><div class="t" style="left:0;width:25px;text-align:center;top:0.8px;font-size:14.5px;font-family:'Liberation Serif',serif;color:#000">33</div></div>
<div class="r" style="left:0px;top:831px;width:25px;height:1px;background:#bcbcbc;"></div>
<div class="r" style="left:0;top:832px;width:25px;height:16px;overflow:hidden"><div class="t" style="left:0;width:25px;text-align:center;top:0.8px;font-size:14.5px;font-family:'Liberation Serif',serif;color:#000">34</div></div>
<div class="r" style="left:0px;top:848px;width:25px;height:1px;background:#bcbcbc;"></div>
<div class="r" style="left:0;top:849px;width:25px;height:16px;overflow:hidden"><div class="t" style="left:0;width:25px;text-align:center;top:0.8px;font-size:14.5px;font-family:'Liberation Serif',serif;color:#000">35</div></div>
<div class="r" style="left:0px;top:865px;width:25px;height:1px;background:#bcbcbc;"></div>
<div class="r" style="left:0;top:866px;width:25px;height:16px;overflow:hidden"><div class="t" style="left:0;width:25px;text-align:center;top:0.8px;font-size:14.5px;font-family:'Liberation Serif',serif;color:#000">36</div></div>
<div class="r" style="left:0px;top:882px;width:25px;height:1px;background:#bcbcbc;"></div>
<div class="r" style="left:0;top:883px;width:25px;height:16px;overflow:hidden"><div class="t" style="left:0;width:25px;text-align:center;top:0.8px;font-size:14.5px;font-family:'Liberation Serif',serif;color:#000">37</div></div>
<div class="r" style="left:0px;top:899px;width:25px;height:1px;background:#bcbcbc;"></div>
<div class="r" style="left:0;top:900px;width:25px;height:16px;overflow:hidden"><div class="t" style="left:0;width:25px;text-align:center;top:0.8px;font-size:14.5px;font-family:'Liberation Serif',serif;color:#000">38</div></div>
<div class="r" style="left:0px;top:916px;width:25px;height:1px;background:#bcbcbc;"></div>
<div class="r" style="left:0;top:917px;width:25px;height:14px;overflow:hidden"><div class="t" style="left:0;width:25px;text-align:center;top:-1.2px;font-size:14.5px;font-family:'Liberation Serif',serif;color:#000">39</div></div>
<div class="r" style="left:0px;top:931px;width:25px;height:1px;background:#bcbcbc;"></div>
<div class="r" style="left:0;top:932px;width:25px;height:14px;overflow:hidden"><div class="t" style="left:0;width:25px;text-align:center;top:-1.2px;font-size:14.5px;font-family:'Liberation Serif',serif;color:#000">40</div></div>
<div class="r" style="left:0px;top:946px;width:25px;height:1px;background:#bcbcbc;"></div>
<div class="r" style="left:0;top:947px;width:25px;height:14px;overflow:hidden"><div class="t" style="left:0;width:25px;text-align:center;top:-1.2px;font-size:14.5px;font-family:'Liberation Serif',serif;color:#000">41</div></div>
<div class="r" style="left:0px;top:961px;width:25px;height:1px;background:#bcbcbc;"></div>
<div class="r" style="left:0;top:962px;width:25px;height:14px;overflow:hidden"><div class="t" style="left:0;width:25px;text-align:center;top:-1.2px;font-size:14.5px;font-family:'Liberation Serif',serif;color:#000">42</div></div>
<div class="r" style="left:0px;top:976px;width:25px;height:1px;background:#bcbcbc;"></div>
<div class="r" style="left:0;top:977px;width:25px;height:5px;overflow:hidden"><div class="t" style="left:0;width:25px;text-align:center;top:-10.2px;font-size:14.5px;font-family:'Liberation Serif',serif;color:#000">43</div></div>
<div class="r" style="left:24px;top:661px;width:2px;height:18px;background:#217346;"></div>
<svg style="left:28px;top:270px" width="70" height="40">
<g fill="none" stroke="#1aa33a" stroke-linecap="round">
<path d="M12.2 8.5C11 12 10 16 9.3 19.3" stroke-width="2"/>
<path d="M18.1 7.4C16.5 12 15 17 14.1 20.7" stroke-width="2"/>
<path d="M6.3 15.2C10 15 15 13 21.8 10.4" stroke-width="1.8"/>
</g>
<text x="26.5" y="12.3" font-family="Liberation Sans" font-size="6.3" font-weight="700" font-style="italic" fill="#1aa33a" textLength="32" lengthAdjust="spacingAndGlyphs">假日酒店</text>
<text x="26.5" y="20.7" font-family="Liberation Sans" font-size="8.2" font-weight="700" font-style="italic" fill="#1aa33a" textLength="39.5" lengthAdjust="spacingAndGlyphs">Holiday Inn</text>
<rect x="27" y="23.3" width="25" height="1.5" fill="#b8bcc4"/>
<rect x="27" y="29" width="12" height="1.4" fill="#7ccf8f"/>
<rect x="27" y="33" width="26" height="1.4" fill="#9ad9a8"/>
</svg>
<svg style="left:145px;top:268px" width="55" height="45">
<rect x="8.3" y="7.1" width="37.1" height="18.3" fill="#15398e"/>
<path d="M26.9 7.5v17.5" stroke="#8fa2cf" stroke-width="0.8"/>
<g fill="none" stroke="#fff" stroke-linecap="round">
<path d="M16.7 9.6C15.5 13 14 18 12.9 21.7" stroke-width="1.5"/>
<path d="M21.2 9.6C19.7 14 18.5 19 17.5 23.7" stroke-width="1.5"/>
<path d="M10.4 17.5C14 17 20 13 26.7 12" stroke-width="1.3"/>
</g>
<rect x="29" y="10.5" width="14" height="1.6" fill="#dfe5f3"/>
<rect x="29" y="14.3" width="14" height="1.8" fill="#dfe5f3"/>
<rect x="29" y="18.3" width="14" height="2.2" fill="#dfe5f3"/>
<rect x="13" y="29.2" width="28" height="1.5" fill="#b8bcc4"/>
<rect x="19.6" y="34.8" width="15" height="1.6" fill="#6f81b8"/>
<rect x="14.7" y="38.7" width="24.3" height="1.4" fill="#8a98c6"/>
</svg>
<div class="t" style="left:374.0px;top:269.0px;font-size:18px;font-family:'Liberation Serif',serif;font-weight:700;color:#000;letter-spacing:2px">付款申请表</div>
<div class="t" style="left:308.3px;top:305.8px;font-size:18.5px;font-family:'Liberation Serif',serif;font-weight:700;color:#000;letter-spacing:0.52px">PAYMENT REQUISITION</div>
<div class="r" style="left:308px;top:323px;width:230px;height:2px;background:#000;"></div>
<div class="r" style="left:674px;top:276px;width:12px;height:10px;background:transparent;border:1px solid #000"></div>
<div class="r" style="left:674px;top:293px;width:12px;height:10px;background:transparent;border:1px solid #000"></div>
<div class="r" style="left:674px;top:315px;width:12px;height:10px;background:transparent;border:1px solid #000"></div>
<div class="r" style="left:675px;top:331px;width:12px;height:10px;background:transparent;border:1px solid #000"></div>
<div class="t" style="left:690.4px;top:275.5px;font-size:11px;font-family:'Liberation Serif',serif;font-weight:400;color:#000;">CASH</div>
<div class="t" style="left:690.4px;top:291.5px;font-size:11px;font-family:'Liberation Serif',serif;font-weight:400;color:#000;">CHEQUE</div>
<div class="t" style="left:690.4px;top:311.2px;font-size:11.5px;font-family:'Liberation Serif',serif;font-weight:400;color:#000;">REMITTANCE</div>
<div class="t" style="left:690.4px;top:329.2px;font-size:11px;font-family:'Liberation Serif',serif;font-weight:400;color:#000;">OTHER</div>
<div class="r" style="left:731px;top:340px;width:36px;height:1px;background:#000;"></div>
<div class="t" style="left:828.0px;top:274.6px;font-size:12px;font-family:'Liberation Serif',serif;font-weight:400;color:#000;">现金</div>
<div class="t" style="left:828.0px;top:290.6px;font-size:12px;font-family:'Liberation Serif',serif;font-weight:400;color:#000;">支票</div>
<div class="t" style="left:828.0px;top:310.5px;font-size:12px;font-family:'Liberation Serif',serif;font-weight:400;color:#000;">汇款</div>
<div class="t" style="left:828.0px;top:329.0px;font-size:12px;font-family:'Liberation Serif',serif;font-weight:400;color:#000;">其它</div>
<div class="t" style="left:28.0px;top:378.0px;font-size:12px;font-family:'Liberation Serif',serif;font-weight:400;color:#000;">致:</div>
<div class="t" style="left:45.0px;top:377.9px;font-size:12.1px;font-family:'Liberation Serif',serif;font-weight:400;color:#000;">财务部</div>
<div class="t" style="left:28.3px;top:394.1px;font-size:12.3px;font-family:'Liberation Serif',serif;font-weight:400;color:#000;">TO: FINANCE</div>
<div class="t" style="left:371.4px;top:376.9px;font-size:12.7px;font-family:'Liberation Serif',serif;font-weight:400;color:#000;">传票号码</div>
<div class="t" style="left:371.4px;top:394.1px;font-size:12.3px;font-family:'Liberation Serif',serif;font-weight:400;color:#000;">PV NO :</div>
<div class="r" style="left:416px;top:407px;width:203px;height:1px;background:#000;"></div>
<div class="t" style="left:28.3px;top:415.9px;font-size:13px;font-family:'Liberation Serif',serif;font-weight:400;color:#000;">由</div>
<div class="t" style="left:104.1px;top:415.2px;font-size:14.5px;font-family:'Liberation Serif',serif;font-weight:400;color:#000;">前厅部</div>
<div class="t" style="left:267.0px;top:416.5px;font-size:13px;font-family:'Liberation Serif',serif;font-weight:400;color:#000;">部门 / 分部</div>
<div class="t" style="left:371.9px;top:416.8px;font-size:12.5px;font-family:'Liberation Serif',serif;font-weight:400;color:#000;">日期</div>
<div class="t" style="left:502.7px;top:416.6px;font-size:12.9px;font-family:'Liberation Sans',sans-serif;font-weight:400;color:#000;">2024年12月18日</div>
<div class="t" style="left:28.3px;top:437.4px;font-size:12.3px;font-family:'Liberation Serif',serif;font-weight:400;color:#000;">FROM :</div>
<div class="r" style="left:73px;top:450px;width:133px;height:1px;background:#000;"></div>
<div class="t" style="left:206.0px;top:437.4px;font-size:12.3px;font-family:'Liberation Serif',serif;font-weight:400;color:#000;">( DEPT / SECTION )</div>
<div class="t" style="left:371.4px;top:437.1px;font-size:12.3px;font-family:'Liberation Serif',serif;font-weight:400;color:#000;">DATE :</div>
<div class="r" style="left:414px;top:450px;width:210px;height:1px;background:#000;"></div>
<div class="t" style="left:28.3px;top:460.0px;font-size:13px;font-family:'Liberation Serif',serif;font-weight:400;color:#000;">收款单位</div>
<div class="t" style="left:104.1px;top:460.3px;font-size:12.4px;font-family:'Liberation Serif',serif;font-weight:400;color:#000;">钟晨晨</div>
<div class="t" style="left:366.0px;top:459.2px;font-size:12.9px;font-family:'Liberation Serif',serif;font-weight:400;color:#000;">开户行</div>
<div class="t" style="left:446.4px;top:459.2px;font-size:12.9px;font-family:'Liberation Sans',sans-serif;font-weight:400;color:#000;">中国银行</div>
<div class="t" style="left:603.4px;top:459.4px;font-size:12.5px;font-family:'Liberation Serif',serif;font-weight:400;color:#000;">帐号</div>
<div class="t" style="left:661.2px;top:459.8px;font-size:12.5px;font-family:'Liberation Sans',sans-serif;font-weight:400;color:#000;">623208 2800021700239</div>
<div class="t" style="left:28.3px;top:480.6px;font-size:12.3px;font-family:'Liberation Serif',serif;font-weight:400;color:#000;">PAYEE :</div>
<div class="r" style="left:76px;top:492px;width:266px;height:1px;background:#000;"></div>
<div class="r" style="left:100px;top:492px;width:166px;height:2px;background:#000;"></div>
<div class="t" style="left:366.0px;top:480.4px;font-size:12.3px;font-family:'Liberation Serif',serif;font-weight:400;color:#000;">BANK :</div>
<div class="r" style="left:414px;top:493px;width:186px;height:1px;background:#000;"></div>
<div class="t" style="left:603.4px;top:480.4px;font-size:12.3px;font-family:'Liberation Serif',serif;font-weight:400;color:#000;">A/C :</div>
<div class="r" style="left:637px;top:493px;width:210px;height:1px;background:#000;"></div>
<div class="r" style="left:658px;top:505px;width:1px;height:48px;background:#000;"></div>
<div class="r" style="left:658px;top:505px;width:168px;height:1px;background:#000;"></div>
<div class="t" style="left:28.7px;top:515.3px;font-size:12px;font-family:'Liberation Serif',serif;font-weight:400;color:#000;">金额</div>
<div class="t" style="left:58.3px;top:515.1px;font-size:12.3px;font-family:'Liberation Serif',serif;font-weight:400;color:#000;letter-spacing:1.2px">人民币</div>
<div class="t" style="left:103.8px;top:515.5px;font-size:11.5px;font-family:'Liberation Serif',serif;font-weight:400;color:#000;">(</div>
<div class="t" style="left:111.0px;top:515.3px;font-size:12px;font-family:'Liberation Serif',serif;font-weight:400;color:#000;">大写</div>
<div class="t" style="left:139.0px;top:515.5px;font-size:11.5px;font-family:'Liberation Serif',serif;font-weight:400;color:#000;">)</div>
<div class="t" style="left:28.7px;top:539.0px;font-size:12.7px;font-family:'Liberation Serif',serif;font-weight:400;color:#000;">AMOUNT  (RMB) :</div>
<div class="t" style="left:190.7px;top:538.6px;font-size:12.8px;font-family:'Liberation Serif',serif;font-weight:400;color:#000;">壹佰叁拾柒元伍角伍分</div>
<div class="r" style="left:155px;top:553px;width:671px;height:1px;background:#000;"></div>
<div class="t" style="left:767.2px;top:539.8px;font-size:11.4px;font-family:'Liberation Mono',monospace;font-weight:400;color:#000;">¥137.55</div>
<div class="t" style="left:28.7px;top:583.8px;font-size:13px;font-family:'Liberation Serif',serif;font-weight:400;color:#000;">用途</div>
<div class="t" style="left:190.7px;top:584.0px;font-size:12px;font-family:'Liberation Sans',sans-serif;font-weight:400;color:#000;">停车场出口指示牌，A4水牌报销</div>
<div class="t" style="left:370.6px;top:583.9px;font-size:12.8px;font-family:'Liberation Serif',serif;font-weight:400;color:#000;">采购单号码</div>
<div class="t" style="left:28.7px;top:603.9px;font-size:12.8px;font-family:'Liberation Serif',serif;font-weight:400;color:#000;">PARTICULARS :</div>
<div class="r" style="left:155px;top:618px;width:214px;height:1px;background:#000;"></div>
<div class="t" style="left:370.6px;top:604.1px;font-size:12.3px;font-family:'Liberation Serif',serif;font-weight:400;color:#000;">P.R.NO :</div>
<div class="r" style="left:420px;top:618px;width:202px;height:1px;background:#000;"></div>
<div class="t" style="left:28.7px;top:630.2px;font-size:12.4px;font-family:'Liberation Serif',serif;font-weight:400;color:#000;">申请人</div>
<div class="t" style="left:28.0px;top:647.6px;font-size:12.3px;font-family:'Liberation Serif',serif;font-weight:400;color:#000;">REQUESTED BY :</div>
<div class="r" style="left:127px;top:660px;width:196px;height:1px;background:#000;"></div>
<div class="t" style="left:371.0px;top:630.1px;font-size:12.5px;font-family:'Liberation Serif',serif;font-weight:400;color:#000;">核对</div>
<div class="t" style="left:371.0px;top:647.6px;font-size:12.3px;font-family:'Liberation Serif',serif;font-weight:400;color:#000;">VERIFIED BY :</div>
<div class="r" style="left:453px;top:660px;width:161px;height:1px;background:#000;"></div>
<div class="t" style="left:647.8px;top:665.0px;font-size:12px;font-family:'Liberation Serif',serif;font-weight:400;color:#000;">部门经理</div>
<div class="t" style="left:607.0px;top:679.9px;font-size:12.6px;font-family:'Liberation Serif',serif;font-weight:400;color:#000;">( DEPARTMENT HEAD )</div>
<div class="r" style="left:25px;top:711px;width:1012px;height:2px;background:#000;"></div>
<div class="t" style="left:496.7px;top:714.7px;font-size:13px;font-family:'Liberation Serif',serif;font-weight:700;color:#000;letter-spacing:0.7px">财务部填写</div>
<div class="t" style="left:402.0px;top:731.8px;font-size:12.45px;font-family:'Liberation Serif',serif;font-weight:700;color:#000;">( FOR ACCOUNTS PAYABLE SECTION USE )</div>
<div class="t" style="left:28.3px;top:750.7px;font-size:12px;font-family:'Liberation Serif',serif;font-weight:400;color:#000;">日期</div>
<div class="t" style="left:28.3px;top:766.6px;font-size:12.3px;font-family:'Liberation Serif',serif;font-weight:400;color:#000;">DATE:</div>
<div class="r" style="left:67px;top:778px;width:252px;height:1px;background:#000;"></div>
<div class="t" style="left:28.3px;top:784.0px;font-size:12px;font-family:'Liberation Serif',serif;font-weight:400;color:#000;">支票号码</div>
<div class="t" style="left:28.3px;top:800.6px;font-size:12.3px;font-family:'Liberation Serif',serif;font-weight:400;color:#000;">CHEQUE NO:</div>
<div class="r" style="left:104px;top:812px;width:216px;height:1px;background:#000;"></div>
<div class="t" style="left:371.0px;top:750.7px;font-size:12px;font-family:'Liberation Serif',serif;font-weight:400;color:#000;">准备</div>
<div class="t" style="left:371.0px;top:766.6px;font-size:12.3px;font-family:'Liberation Serif',serif;font-weight:400;color:#000;">PREPARED BY:</div>
<div class="r" style="left:458px;top:778px;width:204px;height:1px;background:#000;"></div>
<div class="t" style="left:371.0px;top:784.0px;font-size:12px;font-family:'Liberation Serif',serif;font-weight:400;color:#000;">复核</div>
<div class="t" style="left:371.0px;top:800.6px;font-size:12.3px;font-family:'Liberation Serif',serif;font-weight:400;color:#000;">CHECKED BY:</div>
<div class="r" style="left:453px;top:812px;width:210px;height:1px;background:#000;"></div>
<div class="r" style="left:25px;top:830px;width:1012px;height:2px;background:#000;"></div>
<div class="t" style="left:28.3px;top:887.0px;font-size:12.5px;font-family:'Liberation Serif',serif;font-weight:700;color:#000;">批准</div>
<div class="t" style="left:28.3px;top:902.9px;font-size:11.6px;font-family:'Liberation Serif',serif;font-weight:700;color:#000;">APPROVED BY:</div>
<div class="r" style="left:187px;top:899px;width:182px;height:1px;background:#000;"></div>
<div class="t" style="left:251.9px;top:902.6px;font-size:12.8px;font-family:'Liberation Serif',serif;font-weight:700;color:#000;">业主财务</div>
<div class="t" style="left:202.2px;top:917.9px;font-size:11.4px;font-family:'Liberation Serif',serif;font-weight:700;color:#000;">OWNER FINANCIAL LEADER</div>
<div class="r" style="left:600px;top:899px;width:226px;height:1px;background:#000;"></div>
<div class="t" style="left:721.7px;top:902.1px;font-size:12.9px;font-family:'Liberation Serif',serif;font-weight:700;color:#000;">财务总监</div>
<div class="t" style="left:603.3px;top:917.6px;font-size:11.9px;font-family:'Liberation Serif',serif;font-weight:700;color:#000;">DIRECTOR, FINANCE &amp; BUSINESS SUPPORT</div>
<div class="r" style="left:1356px;top:577px;width:65px;height:1px;background:#000;"></div>
<div class="r" style="left:824px;top:660px;width:214px;height:20px;background:transparent;border:2px solid #107c41"></div>
<div class="r" style="left:1032px;top:674px;width:7px;height:7px;background:#fff;"></div>
<div class="r" style="left:1034px;top:676px;width:5px;height:5px;background:#107c41;"></div>
<div class="r" style="left:0px;top:982px;width:1920px;height:29px;background:#e6e6e6;"></div>
<div class="r" style="left:0px;top:982px;width:1899px;height:1px;background:#ababab;"></div>
<svg style="left:26px;top:991px" width="40" height="9"><path d="M5 0.5v8L0.5 4.5z" fill="#bdbdbd"/><path d="M29.5 0.5v8L34 4.5z" fill="#bdbdbd"/></svg>
<div class="r" style="left:100px;top:982px;width:32px;height:25px;background:#fff;border-left:1px solid #ababab;border-right:1px solid #ababab"></div>
<div class="r" style="left:100px;top:1005px;width:32px;height:2px;background:#217346;"></div>
<div class="t" style="left:113.0px;top:987.5px;font-size:13px;font-family:'Liberation Sans',sans-serif;font-weight:400;color:#217346;">1</div>
<svg style="left:164px;top:987px" width="18" height="18"><circle cx="8.5" cy="8.5" r="7.5" fill="none" stroke="#666" stroke-width="1.2"/><path d="M8.5 4.5v8M4.5 8.5h8" stroke="#666" stroke-width="1.8"/></svg>
<div class="r" style="left:1152px;top:992px;width:2px;height:2px;background:#a8a8a8;"></div>
<div class="r" style="left:1152px;top:995px;width:2px;height:2px;background:#a8a8a8;"></div>
<div class="r" style="left:1152px;top:998px;width:2px;height:2px;background:#a8a8a8;"></div>
<div class="r" style="left:1169px;top:989px;width:717px;height:15px;background:#dadada;"></div>
<div class="r" style="left:1169px;top:989px;width:15px;height:15px;background:#fff;border:1px solid #ababab"></div>
<div class="r" style="left:1183px;top:989px;width:679px;height:15px;background:#fff;border:1px solid #ababab"></div>
<div class="r" style="left:1886px;top:989px;width:15px;height:15px;background:#fff;border:1px solid #ababab"></div>
<svg style="left:1174px;top:992px" width="6" height="9"><path d="M4.5 0.5v8L0.5 4.5z" fill="#666"/></svg>
<svg style="left:1891px;top:992px" width="6" height="9"><path d="M0.5 0.5v8L4.5 4.5z" fill="#666"/></svg>
<div class="r" style="left:0px;top:1010px;width:1920px;height:1px;background:#c6c6c6;"></div>
<div class="r" style="left:0px;top:1011px;width:1920px;height:21px;background:#f3f3f3;"></div>
<div class="t" style="left:8.1px;top:1014.6px;font-size:12px;font-family:'Liberation Sans',sans-serif;font-weight:400;color:#444;">就绪</div>
<div class="r" style="left:1629px;top:1011px;width:38px;height:21px;background:#c6c6c6;"></div>
<svg style="left:1640px;top:1014px" width="100" height="14">
<rect x="1" y="1" width="12.5" height="12" fill="#d9d9d9"/>
<path d="M0.8 1.3h13M0.8 5.2h13M0.8 9.1h13M0.8 12.9h13M1.3 0.8v12.6M5.2 0.8v12.6M9.1 0.8v12.6M13.1 0.8v12.6" stroke="#6e6e6e" stroke-width="1.2"/>
<g fill="none" stroke="#6e6e6e" stroke-width="1"><rect x="39.5" y="0.5" width="13" height="12"/><rect x="42.5" y="2.5" width="7" height="8"/><path d="M43.5 4.8h5M43.5 6.8h5M43.5 8.8h5"/>
<rect x="77.5" y="0.5" width="13" height="12"/><path d="M78 7.5h7.5v-7M81.8 0.5v7"/></g>
</svg>
<div class="r" style="left:1748px;top:1020px;width:6px;height:2px;background:#555;"></div>
<div class="r" style="left:1758px;top:1021px;width:100px;height:1px;background:#999;"></div>
<div class="r" style="left:1806px;top:1015px;width:5px;height:11px;background:#666;"></div>
<div class="r" style="left:1861px;top:1020px;width:7px;height:2px;background:#555;"></div>
<div class="r" style="left:1864px;top:1017px;width:2px;height:8px;background:#555;"></div>
<div class="t" style="left:1880.6px;top:1014.4px;font-size:12.3px;font-family:'Liberation Sans',sans-serif;font-weight:400;color:#444;">100%</div>
<div class="r" style="left:0px;top:1032px;width:1920px;height:48px;background:#c6eadb;"></div>
<div class="r" style="left:0px;top:1032px;width:1920px;height:1px;background:#b3cfc3;"></div>
<div class="t" style="left:50.0px;top:1042.8px;font-size:11.5px;font-family:'Liberation Sans',sans-serif;font-weight:400;color:#111;">11°C</div>
<div class="t" style="left:50.0px;top:1058.5px;font-size:11.5px;font-family:'Liberation Sans',sans-serif;font-weight:400;color:#111;">阴</div>
<svg style="left:18px;top:1043px" width="28" height="20">
<defs><linearGradient id="cl" gradientUnits="userSpaceOnUse" x1="0" y1="3" x2="0" y2="18.5"><stop offset="0" stop-color="#8fb0ee"/><stop offset="0.35" stop-color="#c3d4f4"/><stop offset="0.85" stop-color="#d6e2f7"/><stop offset="1" stop-color="#86a8ec"/></linearGradient></defs>
<g fill="url(#cl)"><circle cx="12.5" cy="9.8" r="6.8"/><circle cx="20.2" cy="12.6" r="5.2"/><circle cx="6" cy="13.6" r="4.6"/><rect x="2" y="13" width="23.2" height="5.2" rx="2.5"/></g>
<path d="M7 10.5c2-1 4-.8 5.5 1.2M16.5 9c-1.5.8-2.5 2-3 3.5" fill="none" stroke="#9bb6ea" stroke-width="0.7"/>
</svg>
<svg style="left:639px;top:1045px" width="24" height="24">
<defs><linearGradient id="wg" x1="0" y1="0" x2="1" y2="1"><stop offset="0" stop-color="#3ccbf4"/><stop offset="1" stop-color="#0a6fd6"/></linearGradient></defs>
<rect x="0" y="0" width="11" height="11" fill="url(#wg)"/><rect x="12" y="0" width="11" height="11" fill="url(#wg)"/>
<rect x="0" y="12" width="11" height="11" fill="url(#wg)"/><rect x="12" y="12" width="11" height="11" fill="url(#wg)"/></svg>
<div class="r" style="left:676px;top:1040px;width:218px;height:31px;background:#eaf6f0;border-radius:16px;border:1px solid #d6e6de"></div>
<svg style="left:686px;top:1048px" width="16" height="16"><circle cx="6.5" cy="6.5" r="5" fill="none" stroke="#222" stroke-width="1.6"/><path d="M10 10l4.5 4.5" stroke="#222" stroke-width="1.8"/></svg>
<div class="t" style="left:711.7px;top:1049.3px;font-size:13px;font-family:'Liberation Sans',sans-serif;font-weight:400;color:#555;">搜索</div>
<svg style="left:842px;top:1043px" width="50" height="26">
<path d="M2 14c0-7 6-12 12-11 3 .5 5 3 4 6-2 5-8 7-14 9z" fill="#e9c27a"/><path d="M4 8c3 2 6 6 8 12" stroke="#e05a7a" stroke-width="2" fill="none"/>
<path d="M30 6c2-2 10-2 12 0l1 11c3 .5 5 2 4 3-3 2-16 2-19 0-1-1 1-2.5 4-3z" fill="#6f5ab5"/><path d="M31 14c3 1 9 1 12 0" stroke="#9c8ad8" stroke-width="2"/></svg>
<svg style="left:906px;top:1044px" width="26" height="24">
<rect x="8" y="0" width="16" height="15" fill="#f4f4f4" stroke="#cfcfcf" stroke-width="0.8"/>
<rect x="1" y="7" width="16" height="15" fill="#2b2b2b"/><rect x="8" y="7" width="9" height="8" fill="#bdbdbd"/></svg>
<svg style="left:950px;top:1044px" width="26" height="24">
<path d="M1 2h8l2 2h14v18H1z" fill="#f2b530"/><rect x="1" y="6" width="24" height="16" fill="#ffd34e"/>
<rect x="8" y="15" width="12" height="6" rx="1" fill="#1d7bd7"/></svg>
<div class="r" style="left:959px;top:1072px;width:8px;height:3px;background:#6b7a73;border-radius:2px"></div>
<svg style="left:994px;top:1044px" width="26" height="26">
<defs><linearGradient id="eg" x1="0" y1="0" x2="1" y2="1"><stop offset="0" stop-color="#35c1f1"/><stop offset="0.6" stop-color="#1f8bd6"/><stop offset="1" stop-color="#4fd86c"/></linearGradient></defs>
<circle cx="12.5" cy="12.5" r="12" fill="url(#eg)"/><path d="M6 14c0-5 4-7 8-7 4 0 6 3 6 5h-9c0 3 3 5 7 5 2 0 4-1 5-2-1 4-5 7-10 7-4 0-7-3-7-8z" fill="#0c59a4"/>
<path d="M11 12h9c0-2-2-5-6-5" fill="#7ce3a4" opacity="0.5"/></svg>
<div class="r" style="left:1003px;top:1072px;width:8px;height:3px;background:#6b7a73;border-radius:2px"></div>
<svg style="left:1038px;top:1044px" width="26" height="26">
<path d="M7 5V3a2 2 0 0 1 2-2h6a2 2 0 0 1 2 2v2" fill="none" stroke="#2aa1e8" stroke-width="2"/>
<rect x="0.5" y="5" width="23" height="19" rx="2.5" fill="#1b4f93"/>
<rect x="7" y="10" width="4.5" height="4.5" fill="#f25022"/><rect x="12.5" y="10" width="4.5" height="4.5" fill="#7fba00"/>
<rect x="7" y="15.5" width="4.5" height="4.5" fill="#00a4ef"/><rect x="12.5" y="15.5" width="4.5" height="4.5" fill="#ffb900"/></svg>
<svg style="left:1085px;top:1044px" width="20" height="26">
<rect x="0.5" y="0.5" width="18" height="23" rx="1.5" fill="#5b6770"/><rect x="2.5" y="2.5" width="14" height="4" fill="#8ad8f5"/>
<g fill="#d7dde1"><rect x="2.5" y="8.5" width="3.5" height="3"/><rect x="7.5" y="8.5" width="3.5" height="3"/><rect x="12.5" y="8.5" width="3.5" height="3"/>
<rect x="2.5" y="13" width="3.5" height="3"/><rect x="7.5" y="13" width="3.5" height="3"/>
<rect x="2.5" y="17.5" width="3.5" height="3"/><rect x="7.5" y="17.5" width="3.5" height="3"/></g><rect x="12.5" y="13" width="3.5" height="7.5" fill="#1c3f74"/></svg>
<div class="r" style="left:1091px;top:1072px;width:8px;height:3px;background:#6b7a73;border-radius:2px"></div>
<div class="r" style="left:1119px;top:1036px;width:40px;height:40px;background:#e8b4ae;border-radius:4px"></div>
<div class="r" style="left:1123px;top:1072px;width:32px;height:3px;background:#c8241c;border-radius:2px"></div>
<svg style="left:1126px;top:1045px" width="28" height="24">
<ellipse cx="10" cy="9" rx="9.5" ry="8" fill="#3ec85a"/><path d="M4 15l-1 4 4-2.5z" fill="#3ec85a"/>
<ellipse cx="19" cy="15" rx="8" ry="6.8" fill="#f1f1f1"/><path d="M23 20l2 3-4-1.5z" fill="#f1f1f1"/>
<circle cx="7" cy="7" r="1.1" fill="#1f7a33"/><circle cx="13" cy="7" r="1.1" fill="#1f7a33"/><circle cx="16.5" cy="14" r="0.9" fill="#999"/><circle cx="21.5" cy="14" r="0.9" fill="#999"/></svg>
<svg style="left:1171px;top:1044px" width="26" height="26">
<circle cx="12" cy="12" r="12" fill="#dd4b3d"/>
<path d="M12 12L1.6 6a12 12 0 0 0 10.4 18z" fill="#1ea362"/><path d="M12 12h12a12 12 0 0 1-12 12z" fill="#ffcd40"/>
<path d="M12 12L6 1.6" stroke="none"/>
<circle cx="12" cy="12" r="5.5" fill="#fff"/><circle cx="12" cy="12" r="4.3" fill="#4c8bf5"/></svg>
<div class="r" style="left:1179px;top:1072px;width:8px;height:3px;background:#6b7a73;border-radius:2px"></div>
<svg style="left:1215px;top:1044px" width="26" height="26">
<rect x="0" y="0" width="24" height="24" rx="3" fill="#2f5ce8"/>
<path d="M6 4l6 8 6-8M12 12v9M7 13h10M7 16.5h10" fill="none" stroke="#fff" stroke-width="2.2"/></svg>
<div class="r" style="left:1223px;top:1072px;width:8px;height:3px;background:#6b7a73;border-radius:2px"></div>
<div class="r" style="left:1252px;top:1037px;width:34px;height:38px;background:#dcf1e8;border-radius:4px"></div>
<div class="r" style="left:1286px;top:1037px;width:3px;height:38px;background:#d2e9df;"></div>
<div class="r" style="left:1263px;top:1072px;width:16px;height:3px;background:#0c66d0;border-radius:2px"></div>
<svg style="left:1258px;top:1044px" width="26" height="26">
<rect x="8" y="3" width="16" height="18" fill="#fff" stroke="#21a366" stroke-width="1"/>
<path d="M13 6h9M13 9.5h9M13 13h9M13 16.5h9M17.5 4v16" stroke="#21a366" stroke-width="0.9"/>
<path d="M0 3.5l14-3v23l-14-3z" fill="#107c41"/>
<path d="M3.5 7.5l6 9M9.5 7.5l-6 9" stroke="#fff" stroke-width="2"/></svg>
<svg style="left:1645px;top:1052px" width="12" height="8"><path d="M1 7l5-5.5L11 7" fill="none" stroke="#222" stroke-width="1.4"/></svg>
<svg style="left:1674px;top:1047px" width="20" height="18">
<path d="M15 3.5A7.5 7.5 0 0 0 2 7.5M3 14.5A7.5 7.5 0 0 0 9 16.5" fill="none" stroke="#222" stroke-width="1.3"/>
<path d="M15.5 0.5v3.5h-3.5M1.5 17.5v-3.5h3.5" fill="none" stroke="#222" stroke-width="1.3"/>
<circle cx="12.5" cy="12.5" r="3.5" fill="#0a63d8"/></svg>
<div class="t" style="left:1707.5px;top:1049.5px;font-size:13.5px;font-family:'Liberation Sans',sans-serif;font-weight:400;color:#222;">中</div>
<div class="t" style="left:1745.8px;top:1049.5px;font-size:13.5px;font-family:'Liberation Sans',sans-serif;font-weight:400;color:#222;">拼</div>
<svg style="left:1782px;top:1047px" width="44" height="19">
<g fill="none" stroke="#222" stroke-width="1.2"><path d="M10 2.5H1.5v10h10M6 12.5v3h6"/><rect x="11.5" y="0.5" width="4" height="6" rx="1"/><path d="M13.5 6.5v10"/>
<path d="M25 6.5h3l4-4v13l-4-4h-3z"/><path d="M35 5c1.3 1.5 1.3 5 0 6.5M38 3c2.3 2.5 2.3 8 0 10.5"/></g></svg>
<div class="t" style="left:1873.4px;top:1042.0px;font-size:12px;font-family:'Liberation Sans',sans-serif;font-weight:400;color:#111;">12:38</div>
<div class="t" style="left:1840.0px;top:1058.0px;font-size:12px;font-family:'Liberation Sans',sans-serif;font-weight:400;color:#111;">2025/12/16</div>
</body></html>
